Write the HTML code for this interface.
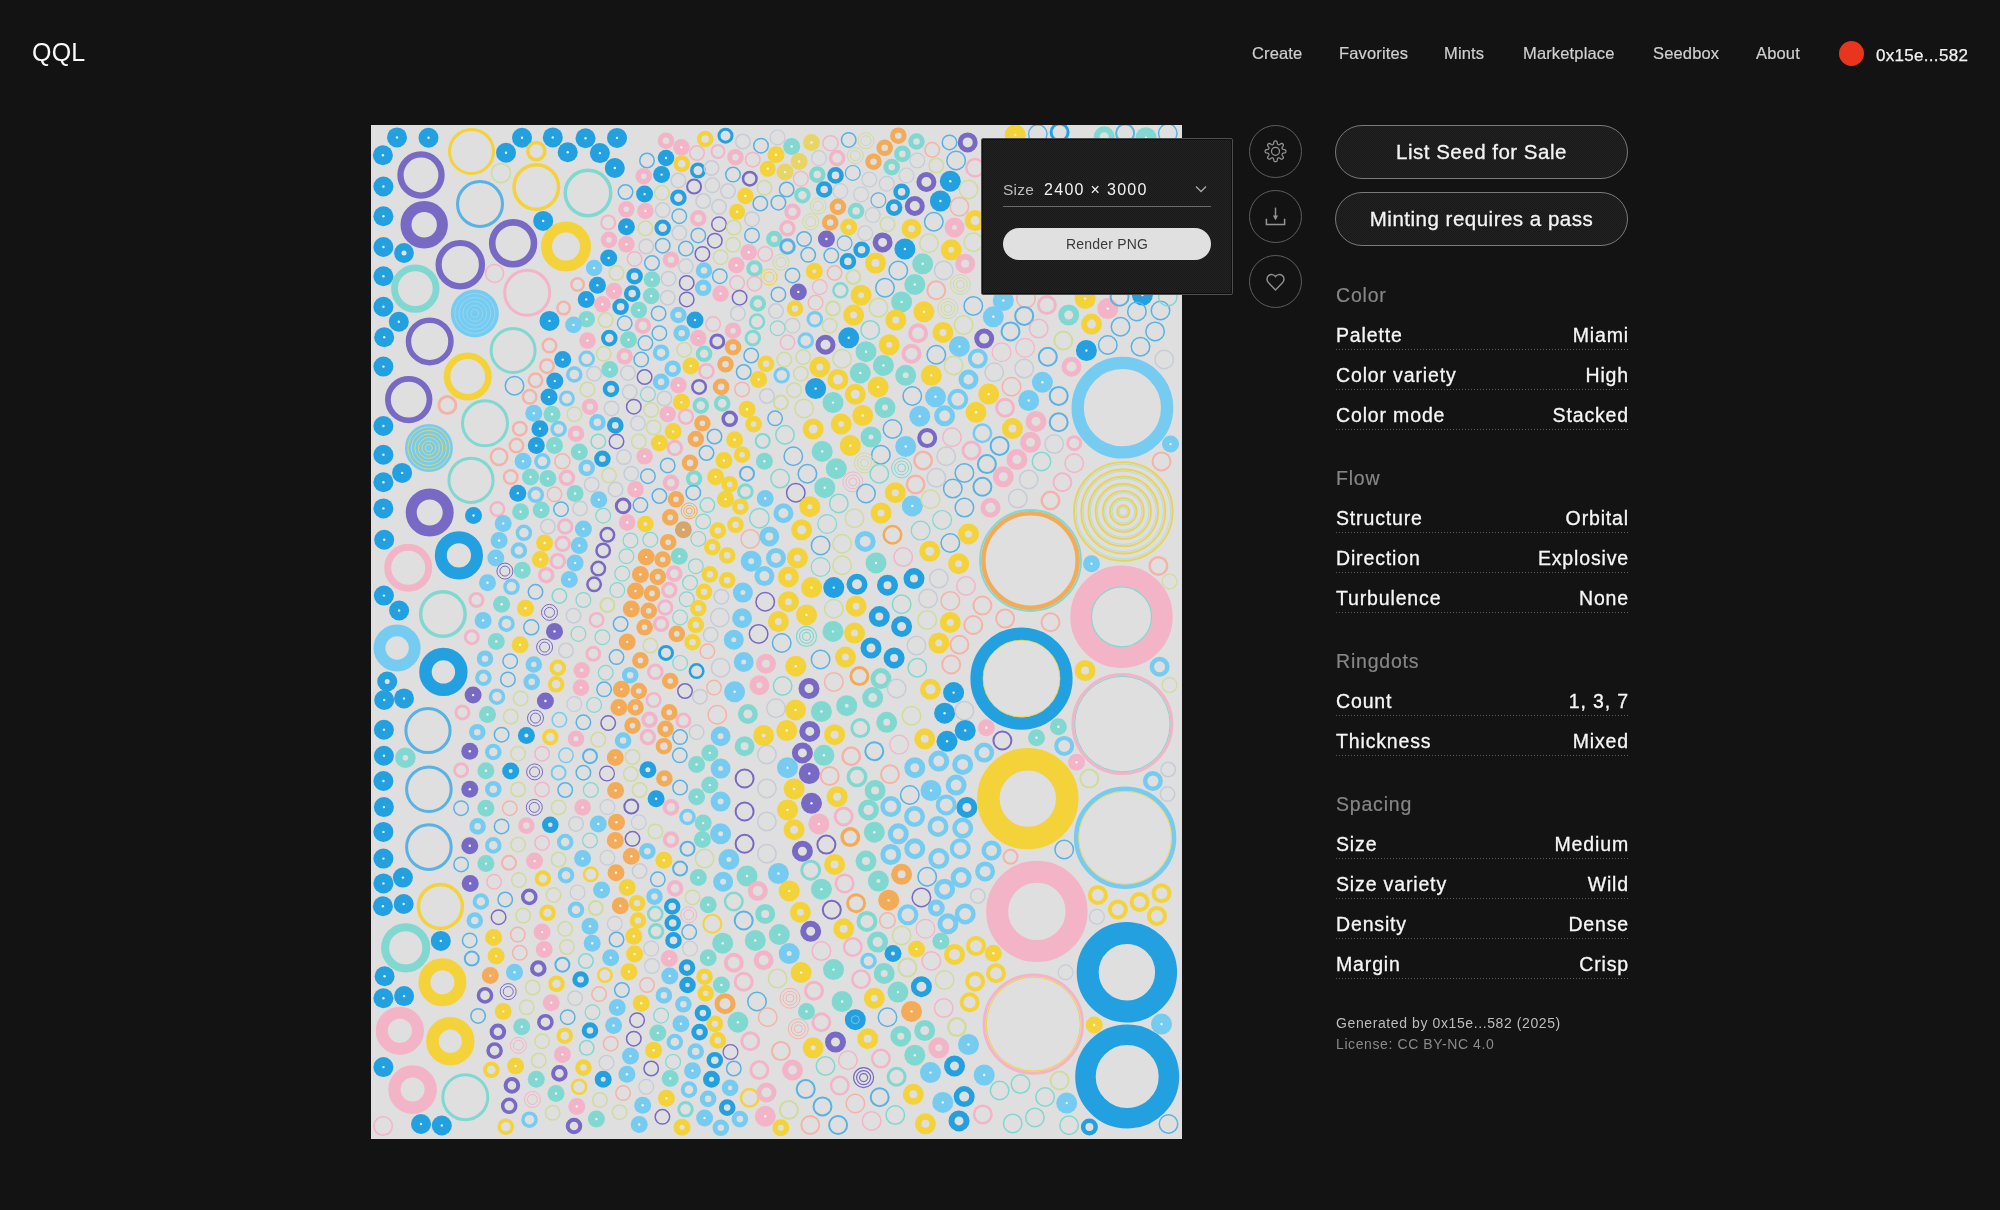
<!DOCTYPE html>
<html><head><meta charset="utf-8"><title>QQL</title>
<style>
html,body{margin:0;padding:0;}
body{width:2000px;height:1210px;background:#131313;position:relative;overflow:hidden;font-family:"Liberation Sans",sans-serif;color:#eee;-webkit-font-smoothing:antialiased;}
.a{will-change:transform;}
.a{position:absolute;white-space:nowrap;}
.logo{left:32px;top:37px;font-size:25px;color:#fafafa;line-height:30px;letter-spacing:0.2px;}
.nav{-webkit-text-stroke:0.2px #cfcfcf;top:43px;font-size:16.5px;color:#cfcfcf;line-height:20px;letter-spacing:0.15px;}
.dot{left:1839px;top:41px;width:25px;height:25px;border-radius:50%;background:#e9351e;}
.wallet{-webkit-text-stroke:0.25px #f2f2f2;left:1876px;top:45.5px;font-size:17px;color:#f2f2f2;line-height:20px;letter-spacing:0.3px;}
.art{left:371px;top:125px;width:811px;height:1014px;background:#dfdfdf;overflow:hidden;}
.pop{left:981px;top:138px;width:250px;height:155px;background:repeating-conic-gradient(#181818 0% 25%,#232323 0% 50%) 0 0/2px 2px;border:1px solid #4e4e4e;border-radius:2px;box-shadow:inset 0 0 0 1px #0f0f0f;}
.ib{left:1249px;width:51px;height:51px;border:1px solid #5e5e5e;border-radius:50%;}
.btn{-webkit-text-stroke:0.3px #f4f4f4;left:1335px;width:291px;height:52px;border:1px solid #7a7a7a;border-radius:27px;background:repeating-conic-gradient(#181818 0% 25%,#222 0% 50%) 0 0/2px 2px;font-size:20.5px;color:#f4f4f4;text-align:center;line-height:52px;letter-spacing:0.5px;}
.sh{-webkit-text-stroke:0.2px #858585;left:1336px;font-size:19.5px;color:#858585;line-height:24px;letter-spacing:0.8px;}
.row{left:1336px;width:292px;font-size:19.5px;color:#f6f6f6;-webkit-text-stroke:0.3px #f6f6f6;line-height:24px;height:24px;letter-spacing:0.85px;}
.row span{position:absolute;right:-1px;top:0;}
.row i{position:absolute;left:0;right:0;top:26px;height:1px;background-image:linear-gradient(to right,#5c5c5c 34%,transparent 34%);background-size:3px 1px;}
.ft{left:1336px;font-size:14px;line-height:17px;letter-spacing:0.6px;}
</style></head><body>
<div class="a logo">QQL</div>
<div class="a nav" style="left:1252px">Create</div>
<div class="a nav" style="left:1339px">Favorites</div>
<div class="a nav" style="left:1444px">Mints</div>
<div class="a nav" style="left:1523px">Marketplace</div>
<div class="a nav" style="left:1653px">Seedbox</div>
<div class="a nav" style="left:1756px">About</div>
<div class="a dot"></div>
<div class="a wallet">0x15e...582</div>
<div class="a art"><svg width="811" height="1014" viewBox="0 0 811 1014" style="position:absolute;left:0;top:0"><circle cx="26.0" cy="12.4" r="10.0" fill="#22a0e0"/><circle cx="26.0" cy="12.4" r="1.2" fill="#f2f2f2"/><circle cx="57.5" cy="12.7" r="10.0" fill="#22a0e0"/><circle cx="57.5" cy="12.7" r="1.2" fill="#f2f2f2"/><circle cx="11.9" cy="30.2" r="10.0" fill="#22a0e0"/><circle cx="11.9" cy="30.2" r="1.2" fill="#f2f2f2"/><circle cx="100.5" cy="26.4" r="22.00" fill="none" stroke="#f4d23a" stroke-width="3.0"/><circle cx="151.0" cy="12.7" r="10.0" fill="#22a0e0"/><circle cx="151.0" cy="12.7" r="1.2" fill="#f2f2f2"/><circle cx="181.8" cy="12.4" r="10.0" fill="#22a0e0"/><circle cx="181.8" cy="12.4" r="1.2" fill="#f2f2f2"/><circle cx="135.0" cy="27.8" r="10.0" fill="#22a0e0"/><circle cx="135.0" cy="27.8" r="1.2" fill="#f2f2f2"/><circle cx="165.3" cy="26.1" r="8.55" fill="none" stroke="#f4d23a" stroke-width="3.5"/><circle cx="196.7" cy="27.3" r="10.0" fill="#22a0e0"/><circle cx="196.7" cy="27.3" r="1.2" fill="#f2f2f2"/><circle cx="50.0" cy="50.0" r="20.55" fill="none" stroke="#7869c4" stroke-width="6.3"/><circle cx="130.0" cy="48.0" r="9.55" fill="none" stroke="#cfdc9c" stroke-width="1.5"/><circle cx="165.3" cy="62.0" r="22.25" fill="none" stroke="#f4d23a" stroke-width="3.5"/><circle cx="12.4" cy="61.5" r="10.0" fill="#22a0e0"/><circle cx="12.4" cy="61.5" r="1.2" fill="#f2f2f2"/><circle cx="109.0" cy="79.0" r="22.50" fill="none" stroke="#58b2e3" stroke-width="3.0"/><circle cx="12.4" cy="91.2" r="10.0" fill="#22a0e0"/><circle cx="12.4" cy="91.2" r="1.2" fill="#f2f2f2"/><circle cx="53.2" cy="99.7" r="18.20" fill="none" stroke="#7869c4" stroke-width="11.0"/><circle cx="172.2" cy="95.9" r="10.0" fill="#22a0e0"/><circle cx="172.2" cy="95.9" r="1.2" fill="#f2f2f2"/><circle cx="142.1" cy="118.3" r="20.90" fill="none" stroke="#7869c4" stroke-width="6.6"/><circle cx="12.4" cy="122.0" r="10.0" fill="#22a0e0"/><circle cx="12.4" cy="122.0" r="1.2" fill="#f2f2f2"/><circle cx="33.0" cy="128.0" r="9.9" fill="#22a0e0"/><circle cx="33.0" cy="128.0" r="2.5" fill="#e2e2e2"/><circle cx="89.3" cy="139.7" r="21.70" fill="none" stroke="#7869c4" stroke-width="6.2"/><circle cx="123.6" cy="148.4" r="9.00" fill="none" stroke="#f4b4c7" stroke-width="1.5"/><circle cx="12.4" cy="151.2" r="10.0" fill="#22a0e0"/><circle cx="12.4" cy="151.2" r="1.2" fill="#f2f2f2"/><circle cx="44.3" cy="163.6" r="20.80" fill="none" stroke="#80d8d1" stroke-width="6.8"/><circle cx="156.2" cy="167.8" r="22.50" fill="none" stroke="#f4b4c7" stroke-width="3.0"/><circle cx="12.4" cy="181.8" r="10.0" fill="#22a0e0"/><circle cx="12.4" cy="181.8" r="1.2" fill="#f2f2f2"/><circle cx="103.8" cy="188.4" r="24.0" fill="#76cbf0"/><circle cx="103.8" cy="188.4" r="4.0" fill="none" stroke="#a8dcf4" stroke-width="0.6"/><circle cx="103.8" cy="188.4" r="8.0" fill="none" stroke="#a8dcf4" stroke-width="0.6"/><circle cx="103.8" cy="188.4" r="12.0" fill="none" stroke="#a8dcf4" stroke-width="0.6"/><circle cx="103.8" cy="188.4" r="16.0" fill="none" stroke="#a8dcf4" stroke-width="0.6"/><circle cx="103.8" cy="188.4" r="20.0" fill="none" stroke="#a8dcf4" stroke-width="0.6"/><circle cx="27.8" cy="196.7" r="10.0" fill="#22a0e0"/><circle cx="27.8" cy="196.7" r="1.2" fill="#f2f2f2"/><circle cx="178.5" cy="195.9" r="10.0" fill="#22a0e0"/><circle cx="178.5" cy="195.9" r="1.2" fill="#f2f2f2"/><circle cx="192.6" cy="183.1" r="6.25" fill="none" stroke="#f5b3a8" stroke-width="2.5"/><circle cx="217.0" cy="68.0" r="22.75" fill="none" stroke="#80d8d1" stroke-width="3.5"/><circle cx="195.0" cy="121.6" r="19.50" fill="none" stroke="#f4d23a" stroke-width="11.0"/><circle cx="214.5" cy="13.2" r="10.0" fill="#22a0e0"/><circle cx="214.5" cy="13.2" r="1.2" fill="#f2f2f2"/><circle cx="246.0" cy="12.9" r="10.0" fill="#22a0e0"/><circle cx="246.0" cy="12.9" r="1.2" fill="#f2f2f2"/><circle cx="228.9" cy="28.1" r="10.0" fill="#22a0e0"/><circle cx="228.9" cy="28.1" r="1.2" fill="#f2f2f2"/><circle cx="243.8" cy="43.0" r="10.0" fill="#22a0e0"/><circle cx="243.8" cy="43.0" r="1.2" fill="#f2f2f2"/><circle cx="203.3" cy="579.1" r="7.40" fill="none" stroke="#c6ccd6" stroke-width="1.2"/><circle cx="223.1" cy="579.9" r="7.40" fill="none" stroke="#80d8d1" stroke-width="1.2"/><circle cx="247.9" cy="582.4" r="8.5" fill="#f3ab58"/><circle cx="247.9" cy="582.4" r="1.2" fill="#f2f2f2"/><circle cx="264.5" cy="582.4" r="5.55" fill="none" stroke="#f3ab58" stroke-width="5.5"/><circle cx="298.3" cy="587.4" r="5.55" fill="none" stroke="#f3ab58" stroke-width="5.5"/><circle cx="312.4" cy="595.6" r="6.50" fill="none" stroke="#f4b4c7" stroke-width="3.0"/><circle cx="346.3" cy="589.8" r="9.25" fill="none" stroke="#f5b3a8" stroke-width="1.5"/><circle cx="376.9" cy="589.0" r="7.25" fill="none" stroke="#80d8d1" stroke-width="5.5"/><circle cx="212.4" cy="597.3" r="7.25" fill="none" stroke="#58b2e3" stroke-width="1.5"/><circle cx="237.2" cy="598.1" r="7.25" fill="none" stroke="#7869c4" stroke-width="1.5"/><circle cx="261.5" cy="600.6" r="5.55" fill="none" stroke="#f3ab58" stroke-width="5.5"/><circle cx="278.5" cy="594.8" r="6.30" fill="none" stroke="#f4b4c7" stroke-width="4.0"/><circle cx="294.5" cy="603.9" r="5.55" fill="none" stroke="#f3ab58" stroke-width="5.5"/><circle cx="325.6" cy="607.2" r="7.25" fill="none" stroke="#c6ccd6" stroke-width="1.5"/><circle cx="349.6" cy="611.3" r="6.50" fill="none" stroke="#76cbf0" stroke-width="7.0"/><circle cx="392.6" cy="610.5" r="10.5" fill="#f4d23a"/><circle cx="392.6" cy="610.5" r="2.0" fill="#e2e2e2"/><circle cx="205.0" cy="613.8" r="8.3" fill="#f4b4c7"/><circle cx="205.0" cy="613.8" r="2.5" fill="#e2e2e2"/><circle cx="227.3" cy="614.6" r="7.25" fill="none" stroke="#cfdc9c" stroke-width="1.5"/><circle cx="252.1" cy="615.5" r="5.80" fill="none" stroke="#76cbf0" stroke-width="5.0"/><circle cx="276.9" cy="612.1" r="6.55" fill="none" stroke="#f4b4c7" stroke-width="3.5"/><circle cx="292.9" cy="621.2" r="6.05" fill="none" stroke="#f3ab58" stroke-width="4.5"/><circle cx="309.1" cy="612.1" r="7.25" fill="none" stroke="#58b2e3" stroke-width="1.5"/><circle cx="373.6" cy="621.2" r="7.00" fill="none" stroke="#80d8d1" stroke-width="6.0"/><circle cx="395.9" cy="629.5" r="9.25" fill="none" stroke="#c6ccd6" stroke-width="1.5"/><circle cx="219.0" cy="631.2" r="7.00" fill="none" stroke="#58b2e3" stroke-width="2.0"/><circle cx="244.3" cy="632.5" r="8.5" fill="#f3ab58"/><circle cx="244.3" cy="632.5" r="1.2" fill="#f2f2f2"/><circle cx="261.5" cy="632.0" r="7.25" fill="none" stroke="#cfdc9c" stroke-width="1.5"/><circle cx="308.8" cy="630.3" r="7.25" fill="none" stroke="#58b2e3" stroke-width="1.5"/><circle cx="338.8" cy="627.9" r="8.5" fill="#80d8d1"/><circle cx="338.8" cy="627.9" r="1.2" fill="#f2f2f2"/><circle cx="325.6" cy="639.4" r="8.5" fill="#80d8d1"/><circle cx="325.6" cy="639.4" r="1.2" fill="#f2f2f2"/><circle cx="349.6" cy="643.6" r="6.25" fill="none" stroke="#76cbf0" stroke-width="7.5"/><circle cx="212.4" cy="647.7" r="7.25" fill="none" stroke="#58b2e3" stroke-width="1.5"/><circle cx="236.0" cy="648.5" r="7.40" fill="none" stroke="#7869c4" stroke-width="1.2"/><circle cx="259.8" cy="649.0" r="7.25" fill="none" stroke="#cfdc9c" stroke-width="1.5"/><circle cx="276.9" cy="644.7" r="8.5" fill="#22a0e0"/><circle cx="276.9" cy="644.7" r="2.5" fill="#e2e2e2"/><circle cx="293.4" cy="653.5" r="5.55" fill="none" stroke="#f3ab58" stroke-width="5.5"/><circle cx="309.1" cy="662.6" r="7.25" fill="none" stroke="#58b2e3" stroke-width="1.5"/><circle cx="338.8" cy="660.1" r="8.5" fill="#80d8d1"/><circle cx="338.8" cy="660.1" r="1.2" fill="#f2f2f2"/><circle cx="325.6" cy="671.7" r="8.5" fill="#80d8d1"/><circle cx="325.6" cy="671.7" r="1.2" fill="#f2f2f2"/><circle cx="373.6" cy="653.5" r="9.00" fill="none" stroke="#7869c4" stroke-width="2.0"/><circle cx="395.9" cy="663.4" r="9.25" fill="none" stroke="#c6ccd6" stroke-width="1.5"/><circle cx="219.8" cy="665.0" r="7.40" fill="none" stroke="#80d8d1" stroke-width="1.2"/><circle cx="244.6" cy="665.5" r="8.5" fill="#f3ab58"/><circle cx="244.6" cy="665.5" r="1.2" fill="#f2f2f2"/><circle cx="268.6" cy="665.0" r="7.25" fill="none" stroke="#cfdc9c" stroke-width="1.5"/><circle cx="285.1" cy="673.8" r="8.5" fill="#22a0e0"/><circle cx="285.1" cy="673.8" r="1.2" fill="#f2f2f2"/><circle cx="300.0" cy="682.4" r="6.30" fill="none" stroke="#f4b4c7" stroke-width="4.0"/><circle cx="349.6" cy="676.6" r="6.50" fill="none" stroke="#76cbf0" stroke-width="7.0"/><circle cx="211.6" cy="682.4" r="8.3" fill="#f4b4c7"/><circle cx="211.6" cy="682.4" r="1.2" fill="#f2f2f2"/><circle cx="236.4" cy="682.1" r="7.40" fill="none" stroke="#c6ccd6" stroke-width="1.2"/><circle cx="260.3" cy="681.6" r="7.00" fill="none" stroke="#7869c4" stroke-width="2.0"/><circle cx="316.5" cy="692.0" r="6.55" fill="none" stroke="#76cbf0" stroke-width="3.5"/><circle cx="332.2" cy="698.1" r="8.5" fill="#80d8d1"/><circle cx="332.2" cy="698.1" r="1.2" fill="#f2f2f2"/><circle cx="373.6" cy="686.5" r="9.00" fill="none" stroke="#7869c4" stroke-width="2.0"/><circle cx="395.9" cy="696.4" r="9.25" fill="none" stroke="#c6ccd6" stroke-width="1.5"/><circle cx="205.0" cy="698.9" r="7.25" fill="none" stroke="#c6ccd6" stroke-width="1.5"/><circle cx="227.3" cy="698.9" r="8.5" fill="#76cbf0"/><circle cx="227.3" cy="698.9" r="1.2" fill="#f2f2f2"/><circle cx="245.5" cy="697.3" r="8.5" fill="#f3ab58"/><circle cx="245.5" cy="697.3" r="1.2" fill="#f2f2f2"/><circle cx="267.8" cy="697.3" r="7.40" fill="none" stroke="#c6ccd6" stroke-width="1.2"/><circle cx="284.3" cy="706.4" r="7.25" fill="none" stroke="#cfdc9c" stroke-width="1.5"/><circle cx="349.6" cy="708.8" r="10.5" fill="#76cbf0"/><circle cx="349.6" cy="708.8" r="2.5" fill="#e2e2e2"/><circle cx="219.0" cy="715.5" r="7.40" fill="none" stroke="#80d8d1" stroke-width="1.2"/><circle cx="244.3" cy="715.5" r="8.5" fill="#f3ab58"/><circle cx="244.3" cy="715.5" r="1.2" fill="#f2f2f2"/><circle cx="261.5" cy="713.8" r="7.25" fill="none" stroke="#7869c4" stroke-width="1.5"/><circle cx="300.0" cy="714.6" r="6.30" fill="none" stroke="#f4b4c7" stroke-width="4.0"/><circle cx="316.5" cy="723.7" r="7.00" fill="none" stroke="#58b2e3" stroke-width="2.0"/><circle cx="331.4" cy="714.6" r="8.5" fill="#80d8d1"/><circle cx="331.4" cy="714.6" r="1.2" fill="#f2f2f2"/><circle cx="373.6" cy="718.8" r="9.00" fill="none" stroke="#7869c4" stroke-width="2.0"/><circle cx="395.9" cy="728.7" r="9.25" fill="none" stroke="#c6ccd6" stroke-width="1.5"/><circle cx="211.6" cy="733.6" r="8.5" fill="#76cbf0"/><circle cx="211.6" cy="733.6" r="1.2" fill="#f2f2f2"/><circle cx="236.4" cy="732.8" r="7.40" fill="none" stroke="#c6ccd6" stroke-width="1.2"/><circle cx="260.3" cy="731.2" r="8.5" fill="#f3ab58"/><circle cx="260.3" cy="731.2" r="1.2" fill="#f2f2f2"/><circle cx="276.4" cy="726.2" r="5.80" fill="none" stroke="#76cbf0" stroke-width="5.0"/><circle cx="292.9" cy="735.3" r="8.5" fill="#f4d23a"/><circle cx="292.9" cy="735.3" r="1.2" fill="#f2f2f2"/><circle cx="333.6" cy="733.6" r="9.25" fill="none" stroke="#cfdc9c" stroke-width="1.5"/><circle cx="357.9" cy="734.5" r="10.5" fill="#76cbf0"/><circle cx="357.9" cy="734.5" r="2.5" fill="#e2e2e2"/><circle cx="219.8" cy="749.3" r="6.75" fill="none" stroke="#f4d23a" stroke-width="2.5"/><circle cx="245.0" cy="747.7" r="8.5" fill="#f3ab58"/><circle cx="245.0" cy="747.7" r="1.2" fill="#f2f2f2"/><circle cx="268.6" cy="746.0" r="7.25" fill="none" stroke="#c6ccd6" stroke-width="1.5"/><circle cx="286.8" cy="754.3" r="7.25" fill="none" stroke="#58b2e3" stroke-width="1.5"/><circle cx="309.1" cy="743.6" r="7.00" fill="none" stroke="#58b2e3" stroke-width="2.0"/><circle cx="327.3" cy="752.6" r="8.5" fill="#80d8d1"/><circle cx="327.3" cy="752.6" r="1.2" fill="#f2f2f2"/><circle cx="352.1" cy="756.8" r="6.50" fill="none" stroke="#76cbf0" stroke-width="7.0"/><circle cx="376.0" cy="751.0" r="10.5" fill="#80d8d1"/><circle cx="376.0" cy="751.0" r="1.2" fill="#f2f2f2"/><circle cx="230.6" cy="765.0" r="8.5" fill="#76cbf0"/><circle cx="230.6" cy="765.0" r="1.2" fill="#f2f2f2"/><circle cx="256.2" cy="762.6" r="8.5" fill="#f4d23a"/><circle cx="256.2" cy="762.6" r="1.2" fill="#f2f2f2"/><circle cx="304.1" cy="763.4" r="6.30" fill="none" stroke="#f4b4c7" stroke-width="4.0"/><circle cx="386.8" cy="765.9" r="7.50" fill="none" stroke="#f4b4c7" stroke-width="5.0"/><circle cx="206.6" cy="767.4" r="7.40" fill="none" stroke="#c6ccd6" stroke-width="1.2"/><circle cx="283.5" cy="771.6" r="5.80" fill="none" stroke="#76cbf0" stroke-width="5.0"/><circle cx="321.5" cy="772.4" r="7.25" fill="none" stroke="#cfdc9c" stroke-width="1.5"/><circle cx="337.2" cy="779.8" r="8.5" fill="#80d8d1"/><circle cx="337.2" cy="779.8" r="1.2" fill="#f2f2f2"/><circle cx="362.8" cy="776.5" r="8.75" fill="none" stroke="#80d8d1" stroke-width="2.5"/><circle cx="205.0" cy="784.8" r="6.30" fill="none" stroke="#76cbf0" stroke-width="4.0"/><circle cx="224.8" cy="783.1" r="7.00" fill="none" stroke="#cfdc9c" stroke-width="2.0"/><circle cx="249.3" cy="780.7" r="8.5" fill="#f3ab58"/><circle cx="249.3" cy="780.7" r="1.2" fill="#f2f2f2"/><circle cx="266.1" cy="778.2" r="5.80" fill="none" stroke="#f4d23a" stroke-width="5.0"/><circle cx="284.3" cy="788.9" r="7.05" fill="none" stroke="#80d8d1" stroke-width="2.5"/><circle cx="301.2" cy="781.5" r="6.05" fill="none" stroke="#22a0e0" stroke-width="4.5"/><circle cx="317.7" cy="789.8" r="8.0" fill="none" stroke="#f4b4c7" stroke-width="1.0"/><circle cx="317.7" cy="789.8" r="5.0" fill="none" stroke="#f4b4c7" stroke-width="1.0"/><circle cx="341.3" cy="798.8" r="9.00" fill="none" stroke="#f4d23a" stroke-width="2.0"/><circle cx="372.7" cy="795.5" r="9.00" fill="none" stroke="#58b2e3" stroke-width="2.0"/><circle cx="394.2" cy="788.9" r="7.00" fill="none" stroke="#80d8d1" stroke-width="6.0"/><circle cx="219.0" cy="801.3" r="8.5" fill="#76cbf0"/><circle cx="219.0" cy="801.3" r="1.2" fill="#f2f2f2"/><circle cx="243.8" cy="798.8" r="7.40" fill="none" stroke="#c6ccd6" stroke-width="1.2"/><circle cx="266.9" cy="795.5" r="5.80" fill="none" stroke="#f4d23a" stroke-width="5.0"/><circle cx="285.1" cy="806.3" r="6.80" fill="none" stroke="#80d8d1" stroke-width="3.0"/><circle cx="301.7" cy="798.0" r="6.05" fill="none" stroke="#22a0e0" stroke-width="4.5"/><circle cx="318.2" cy="807.1" r="7.25" fill="none" stroke="#58b2e3" stroke-width="1.5"/><circle cx="221.2" cy="818.2" r="8.5" fill="#76cbf0"/><circle cx="221.2" cy="818.2" r="1.2" fill="#f2f2f2"/><circle cx="245.5" cy="814.5" r="7.25" fill="none" stroke="#58b2e3" stroke-width="1.5"/><circle cx="262.8" cy="811.2" r="8.5" fill="#f4d23a"/><circle cx="262.8" cy="811.2" r="1.2" fill="#f2f2f2"/><circle cx="302.5" cy="815.4" r="6.05" fill="none" stroke="#22a0e0" stroke-width="4.5"/><circle cx="319.0" cy="823.6" r="7.40" fill="none" stroke="#c6ccd6" stroke-width="1.2"/><circle cx="351.7" cy="818.2" r="10.5" fill="#80d8d1"/><circle cx="351.7" cy="818.2" r="1.2" fill="#f2f2f2"/><circle cx="384.3" cy="815.4" r="10.5" fill="#80d8d1"/><circle cx="384.3" cy="815.4" r="1.2" fill="#f2f2f2"/><circle cx="280.2" cy="823.6" r="7.40" fill="none" stroke="#c6ccd6" stroke-width="1.2"/><circle cx="214.9" cy="836.0" r="7.25" fill="none" stroke="#80d8d1" stroke-width="1.5"/><circle cx="239.7" cy="832.7" r="8.5" fill="#76cbf0"/><circle cx="239.7" cy="832.7" r="1.2" fill="#f2f2f2"/><circle cx="263.6" cy="829.1" r="8.5" fill="#f4d23a"/><circle cx="263.6" cy="829.1" r="1.2" fill="#f2f2f2"/><circle cx="281.0" cy="841.0" r="7.40" fill="none" stroke="#c6ccd6" stroke-width="1.2"/><circle cx="298.3" cy="833.6" r="8.5" fill="#f4b4c7"/><circle cx="298.3" cy="833.6" r="1.2" fill="#f2f2f2"/><circle cx="337.2" cy="832.7" r="8.5" fill="#80d8d1"/><circle cx="337.2" cy="832.7" r="1.2" fill="#f2f2f2"/><circle cx="362.8" cy="837.7" r="8.00" fill="none" stroke="#f4b4c7" stroke-width="4.0"/><circle cx="392.6" cy="835.2" r="7.50" fill="none" stroke="#f4b4c7" stroke-width="5.0"/><circle cx="209.6" cy="854.5" r="5.80" fill="none" stroke="#22a0e0" stroke-width="5.0"/><circle cx="233.9" cy="850.1" r="6.75" fill="none" stroke="#f4d23a" stroke-width="2.5"/><circle cx="257.9" cy="846.8" r="8.5" fill="#f4d23a"/><circle cx="257.9" cy="846.8" r="1.2" fill="#f2f2f2"/><circle cx="298.8" cy="850.9" r="8.5" fill="#76cbf0"/><circle cx="298.8" cy="850.9" r="1.2" fill="#f2f2f2"/><circle cx="316.0" cy="842.6" r="5.80" fill="none" stroke="#22a0e0" stroke-width="5.0"/><circle cx="316.5" cy="860.0" r="5.30" fill="none" stroke="#22a0e0" stroke-width="6.0"/><circle cx="333.6" cy="851.7" r="5.80" fill="none" stroke="#f4d23a" stroke-width="5.0"/><circle cx="350.4" cy="860.0" r="8.5" fill="#80d8d1"/><circle cx="350.4" cy="860.0" r="1.2" fill="#f2f2f2"/><circle cx="372.7" cy="856.7" r="8.50" fill="none" stroke="#f4b4c7" stroke-width="3.0"/><circle cx="204.1" cy="873.2" r="7.25" fill="none" stroke="#c6ccd6" stroke-width="1.5"/><circle cx="228.1" cy="869.1" r="7.25" fill="none" stroke="#f5b3a8" stroke-width="1.5"/><circle cx="250.9" cy="865.0" r="7.25" fill="none" stroke="#58b2e3" stroke-width="1.5"/><circle cx="276.0" cy="860.0" r="7.25" fill="none" stroke="#f5b3a8" stroke-width="1.5"/><circle cx="292.9" cy="870.4" r="5.80" fill="none" stroke="#76cbf0" stroke-width="5.0"/><circle cx="334.7" cy="868.3" r="5.55" fill="none" stroke="#f4d23a" stroke-width="5.5"/><circle cx="354.0" cy="878.7" r="8.00" fill="none" stroke="#f3ab58" stroke-width="5.0"/><circle cx="386.0" cy="876.5" r="9.25" fill="none" stroke="#58b2e3" stroke-width="1.5"/><circle cx="221.5" cy="887.3" r="7.40" fill="none" stroke="#80d8d1" stroke-width="1.2"/><circle cx="246.3" cy="882.6" r="8.5" fill="#76cbf0"/><circle cx="246.3" cy="882.6" r="1.2" fill="#f2f2f2"/><circle cx="270.2" cy="878.2" r="8.5" fill="#f4d23a"/><circle cx="270.2" cy="878.2" r="1.2" fill="#f2f2f2"/><circle cx="312.4" cy="879.3" r="5.80" fill="none" stroke="#76cbf0" stroke-width="5.0"/><circle cx="331.9" cy="888.1" r="5.80" fill="none" stroke="#22a0e0" stroke-width="5.0"/><circle cx="290.1" cy="890.6" r="7.40" fill="none" stroke="#80d8d1" stroke-width="1.2"/><circle cx="366.9" cy="897.2" r="10.5" fill="#80d8d1"/><circle cx="366.9" cy="897.2" r="1.2" fill="#f2f2f2"/><circle cx="396.7" cy="892.2" r="9.25" fill="none" stroke="#f5b3a8" stroke-width="1.5"/><circle cx="219.0" cy="905.5" r="5.80" fill="none" stroke="#22a0e0" stroke-width="5.0"/><circle cx="242.6" cy="900.5" r="8.5" fill="#76cbf0"/><circle cx="242.6" cy="900.5" r="1.2" fill="#f2f2f2"/><circle cx="266.1" cy="895.2" r="7.25" fill="none" stroke="#7869c4" stroke-width="1.5"/><circle cx="286.8" cy="907.9" r="8.5" fill="#80d8d1"/><circle cx="286.8" cy="907.9" r="1.2" fill="#f2f2f2"/><circle cx="309.9" cy="898.8" r="8.5" fill="#76cbf0"/><circle cx="309.9" cy="898.8" r="1.2" fill="#f2f2f2"/><circle cx="328.6" cy="907.1" r="5.80" fill="none" stroke="#22a0e0" stroke-width="5.0"/><circle cx="343.8" cy="898.8" r="5.80" fill="none" stroke="#f4d23a" stroke-width="5.0"/><circle cx="379.3" cy="916.2" r="8.50" fill="none" stroke="#f4b4c7" stroke-width="3.0"/><circle cx="215.7" cy="922.8" r="7.25" fill="none" stroke="#80d8d1" stroke-width="1.5"/><circle cx="239.7" cy="918.7" r="7.25" fill="none" stroke="#f5b3a8" stroke-width="1.5"/><circle cx="262.8" cy="913.7" r="7.25" fill="none" stroke="#7869c4" stroke-width="1.5"/><circle cx="303.8" cy="917.0" r="6.30" fill="none" stroke="#76cbf0" stroke-width="4.0"/><circle cx="346.8" cy="915.4" r="5.80" fill="none" stroke="#f4d23a" stroke-width="5.0"/><circle cx="359.5" cy="927.0" r="7.40" fill="none" stroke="#7869c4" stroke-width="1.2"/><circle cx="212.4" cy="942.6" r="5.80" fill="none" stroke="#f4d23a" stroke-width="5.0"/><circle cx="235.5" cy="937.7" r="7.40" fill="none" stroke="#c6ccd6" stroke-width="1.2"/><circle cx="259.5" cy="931.1" r="8.5" fill="#76cbf0"/><circle cx="259.5" cy="931.1" r="1.2" fill="#f2f2f2"/><circle cx="282.6" cy="925.3" r="8.5" fill="#f4d23a"/><circle cx="282.6" cy="925.3" r="1.2" fill="#f2f2f2"/><circle cx="302.1" cy="936.9" r="7.40" fill="none" stroke="#80d8d1" stroke-width="1.2"/><circle cx="324.7" cy="926.5" r="6.05" fill="none" stroke="#76cbf0" stroke-width="4.5"/><circle cx="343.8" cy="935.2" r="6.05" fill="none" stroke="#22a0e0" stroke-width="4.5"/><circle cx="362.8" cy="943.5" r="7.25" fill="none" stroke="#58b2e3" stroke-width="1.5"/><circle cx="388.4" cy="945.1" r="8.50" fill="none" stroke="#f4b4c7" stroke-width="3.0"/><circle cx="232.2" cy="954.2" r="5.50" fill="none" stroke="#22a0e0" stroke-width="6.0"/><circle cx="255.9" cy="949.3" r="8.5" fill="#76cbf0"/><circle cx="255.9" cy="949.3" r="1.2" fill="#f2f2f2"/><circle cx="280.2" cy="943.5" r="7.25" fill="none" stroke="#7869c4" stroke-width="1.5"/><circle cx="299.2" cy="953.4" r="8.5" fill="#80d8d1"/><circle cx="299.2" cy="953.4" r="1.2" fill="#f2f2f2"/><circle cx="321.5" cy="945.8" r="8.5" fill="#76cbf0"/><circle cx="321.5" cy="945.8" r="1.2" fill="#f2f2f2"/><circle cx="340.5" cy="954.2" r="5.50" fill="none" stroke="#22a0e0" stroke-width="6.0"/><circle cx="208.1" cy="961.8" r="7.05" fill="none" stroke="#f4d23a" stroke-width="2.5"/><circle cx="252.1" cy="968.1" r="7.25" fill="none" stroke="#f5b3a8" stroke-width="1.5"/><circle cx="275.2" cy="961.8" r="7.40" fill="none" stroke="#c6ccd6" stroke-width="1.2"/><circle cx="318.0" cy="964.6" r="6.30" fill="none" stroke="#76cbf0" stroke-width="4.0"/><circle cx="359.1" cy="962.9" r="5.30" fill="none" stroke="#76cbf0" stroke-width="6.0"/><circle cx="378.7" cy="972.7" r="8.75" fill="none" stroke="#f4d23a" stroke-width="2.5"/><circle cx="395.5" cy="967.5" r="7.50" fill="none" stroke="#f4b4c7" stroke-width="5.0"/><circle cx="205.8" cy="981.4" r="8.5" fill="#f4b4c7"/><circle cx="205.8" cy="981.4" r="1.2" fill="#f2f2f2"/><circle cx="228.9" cy="975.1" r="7.25" fill="none" stroke="#cfdc9c" stroke-width="1.5"/><circle cx="271.7" cy="980.3" r="8.5" fill="#76cbf0"/><circle cx="271.7" cy="980.3" r="1.2" fill="#f2f2f2"/><circle cx="295.4" cy="973.3" r="8.5" fill="#f4d23a"/><circle cx="295.4" cy="973.3" r="1.2" fill="#f2f2f2"/><circle cx="337.1" cy="973.9" r="5.80" fill="none" stroke="#76cbf0" stroke-width="5.0"/><circle cx="314.5" cy="984.3" r="6.80" fill="none" stroke="#80d8d1" stroke-width="3.0"/><circle cx="356.2" cy="982.6" r="5.80" fill="none" stroke="#22a0e0" stroke-width="5.0"/><circle cx="225.4" cy="994.1" r="8.5" fill="#80d8d1"/><circle cx="225.4" cy="994.1" r="1.2" fill="#f2f2f2"/><circle cx="248.6" cy="987.2" r="7.25" fill="none" stroke="#cfdc9c" stroke-width="1.5"/><circle cx="291.4" cy="991.8" r="7.25" fill="none" stroke="#7869c4" stroke-width="1.5"/><circle cx="268.2" cy="999.4" r="8.5" fill="#76cbf0"/><circle cx="268.2" cy="999.4" r="1.2" fill="#f2f2f2"/><circle cx="333.6" cy="993.0" r="8.5" fill="#76cbf0"/><circle cx="333.6" cy="993.0" r="1.2" fill="#f2f2f2"/><circle cx="368.9" cy="994.1" r="5.80" fill="none" stroke="#76cbf0" stroke-width="5.0"/><circle cx="394.3" cy="991.3" r="10.5" fill="#f4b4c7"/><circle cx="394.3" cy="991.3" r="1.2" fill="#f2f2f2"/><circle cx="203.0" cy="1001.0" r="6.30" fill="none" stroke="#7869c4" stroke-width="4.0"/><circle cx="311.0" cy="1002.2" r="8.5" fill="#f4d23a"/><circle cx="311.0" cy="1002.2" r="2.5" fill="#e2e2e2"/><circle cx="349.8" cy="1002.8" r="5.80" fill="none" stroke="#76cbf0" stroke-width="5.0"/><circle cx="406.6" cy="12.4" r="7.40" fill="none" stroke="#c6ccd6" stroke-width="1.2"/><circle cx="420.7" cy="21.5" r="8.5" fill="#80d8d1"/><circle cx="420.7" cy="21.5" r="1.2" fill="#f2f2f2"/><circle cx="440.5" cy="17.4" r="8.5" fill="#e7d566"/><circle cx="440.5" cy="17.4" r="1.2" fill="#f2f2f2"/><circle cx="459.5" cy="18.2" r="7.55" fill="none" stroke="#f4b4c7" stroke-width="1.5"/><circle cx="477.7" cy="14.9" r="7.25" fill="none" stroke="#58b2e3" stroke-width="1.5"/><circle cx="495.0" cy="15.7" r="8.0" fill="none" stroke="#cfdc9c" stroke-width="1.0"/><circle cx="495.0" cy="15.7" r="5.0" fill="none" stroke="#cfdc9c" stroke-width="1.0"/><circle cx="527.3" cy="10.7" r="5.80" fill="none" stroke="#f3ab58" stroke-width="5.0"/><circle cx="513.7" cy="22.8" r="5.80" fill="none" stroke="#f3ab58" stroke-width="5.0"/><circle cx="545.5" cy="16.5" r="5.80" fill="none" stroke="#80d8d1" stroke-width="5.0"/><circle cx="561.2" cy="24.8" r="7.25" fill="none" stroke="#f5b3a8" stroke-width="1.5"/><circle cx="578.5" cy="17.4" r="7.25" fill="none" stroke="#58b2e3" stroke-width="1.5"/><circle cx="596.7" cy="17.4" r="7.50" fill="none" stroke="#7869c4" stroke-width="5.0"/><circle cx="405.0" cy="29.8" r="8.5" fill="#f4d23a"/><circle cx="405.0" cy="29.8" r="1.2" fill="#f2f2f2"/><circle cx="447.9" cy="33.1" r="7.40" fill="none" stroke="#c6ccd6" stroke-width="1.2"/><circle cx="466.1" cy="33.1" r="6.55" fill="none" stroke="#f4b4c7" stroke-width="3.5"/><circle cx="484.3" cy="30.6" r="8.0" fill="none" stroke="#cfdc9c" stroke-width="1.0"/><circle cx="484.3" cy="30.6" r="5.0" fill="none" stroke="#cfdc9c" stroke-width="1.0"/><circle cx="502.5" cy="36.7" r="5.80" fill="none" stroke="#f3ab58" stroke-width="5.0"/><circle cx="531.4" cy="28.9" r="5.80" fill="none" stroke="#80d8d1" stroke-width="5.0"/><circle cx="546.3" cy="35.5" r="7.40" fill="none" stroke="#c6ccd6" stroke-width="1.2"/><circle cx="565.3" cy="40.5" r="7.25" fill="none" stroke="#cfdc9c" stroke-width="1.5"/><circle cx="585.1" cy="35.5" r="9.25" fill="none" stroke="#58b2e3" stroke-width="1.5"/><circle cx="428.1" cy="36.4" r="8.5" fill="#e7d566"/><circle cx="428.1" cy="36.4" r="1.2" fill="#f2f2f2"/><circle cx="414.0" cy="47.1" r="8.5" fill="#e7d566"/><circle cx="414.0" cy="47.1" r="1.2" fill="#f2f2f2"/><circle cx="429.8" cy="53.7" r="7.40" fill="none" stroke="#f4b4c7" stroke-width="1.2"/><circle cx="446.3" cy="49.6" r="6.05" fill="none" stroke="#80d8d1" stroke-width="4.5"/><circle cx="464.5" cy="50.4" r="6.05" fill="none" stroke="#22a0e0" stroke-width="4.5"/><circle cx="481.8" cy="47.9" r="7.40" fill="none" stroke="#58b2e3" stroke-width="1.2"/><circle cx="498.3" cy="54.5" r="7.40" fill="none" stroke="#c6ccd6" stroke-width="1.2"/><circle cx="520.7" cy="42.1" r="5.80" fill="none" stroke="#80d8d1" stroke-width="5.0"/><circle cx="535.5" cy="50.4" r="7.40" fill="none" stroke="#c6ccd6" stroke-width="1.2"/><circle cx="555.4" cy="57.0" r="7.50" fill="none" stroke="#7869c4" stroke-width="5.0"/><circle cx="579.3" cy="56.2" r="10.5" fill="#22a0e0"/><circle cx="579.3" cy="56.2" r="1.2" fill="#f2f2f2"/><circle cx="597.5" cy="64.5" r="9.25" fill="none" stroke="#cfdc9c" stroke-width="1.5"/><circle cx="415.7" cy="64.5" r="7.25" fill="none" stroke="#58b2e3" stroke-width="1.5"/><circle cx="453.2" cy="64.5" r="6.05" fill="none" stroke="#22a0e0" stroke-width="4.5"/><circle cx="469.4" cy="66.1" r="7.40" fill="none" stroke="#c6ccd6" stroke-width="1.2"/><circle cx="490.1" cy="69.4" r="7.40" fill="none" stroke="#c6ccd6" stroke-width="1.2"/><circle cx="515.7" cy="58.7" r="7.40" fill="none" stroke="#c6ccd6" stroke-width="1.2"/><circle cx="530.6" cy="66.9" r="6.05" fill="none" stroke="#22a0e0" stroke-width="4.5"/><circle cx="407.4" cy="77.7" r="7.25" fill="none" stroke="#58b2e3" stroke-width="1.5"/><circle cx="431.4" cy="70.2" r="6.30" fill="none" stroke="#80d8d1" stroke-width="4.0"/><circle cx="447.1" cy="81.0" r="8.0" fill="none" stroke="#cfdc9c" stroke-width="1.0"/><circle cx="447.1" cy="81.0" r="5.0" fill="none" stroke="#cfdc9c" stroke-width="1.0"/><circle cx="466.9" cy="81.8" r="5.80" fill="none" stroke="#f3ab58" stroke-width="5.0"/><circle cx="485.1" cy="86.0" r="6.05" fill="none" stroke="#80d8d1" stroke-width="4.5"/><circle cx="507.4" cy="75.2" r="7.40" fill="none" stroke="#58b2e3" stroke-width="1.2"/><circle cx="523.1" cy="82.6" r="6.05" fill="none" stroke="#22a0e0" stroke-width="4.5"/><circle cx="543.8" cy="81.0" r="7.50" fill="none" stroke="#7869c4" stroke-width="5.0"/><circle cx="569.4" cy="76.0" r="10.5" fill="#22a0e0"/><circle cx="569.4" cy="76.0" r="1.2" fill="#f2f2f2"/><circle cx="588.4" cy="81.8" r="9.25" fill="none" stroke="#f5b3a8" stroke-width="1.5"/><circle cx="421.5" cy="86.8" r="6.30" fill="none" stroke="#f4b4c7" stroke-width="4.0"/><circle cx="439.7" cy="96.7" r="8.0" fill="none" stroke="#cfdc9c" stroke-width="1.0"/><circle cx="439.7" cy="96.7" r="5.0" fill="none" stroke="#cfdc9c" stroke-width="1.0"/><circle cx="459.2" cy="97.5" r="5.80" fill="none" stroke="#f3ab58" stroke-width="5.0"/><circle cx="477.7" cy="102.1" r="8.5" fill="#f4d23a"/><circle cx="477.7" cy="102.1" r="2.5" fill="#e2e2e2"/><circle cx="501.7" cy="90.1" r="7.40" fill="none" stroke="#c6ccd6" stroke-width="1.2"/><circle cx="516.5" cy="99.2" r="7.25" fill="none" stroke="#cfdc9c" stroke-width="1.5"/><circle cx="540.5" cy="103.8" r="6.75" fill="none" stroke="#f4d23a" stroke-width="6.5"/><circle cx="562.8" cy="96.7" r="9.25" fill="none" stroke="#58b2e3" stroke-width="1.5"/><circle cx="583.5" cy="102.5" r="6.25" fill="none" stroke="#f4b4c7" stroke-width="7.5"/><circle cx="416.5" cy="103.3" r="6.55" fill="none" stroke="#f4b4c7" stroke-width="3.5"/><circle cx="403.3" cy="114.0" r="5.80" fill="none" stroke="#80d8d1" stroke-width="5.0"/><circle cx="433.1" cy="114.0" r="7.25" fill="none" stroke="#58b2e3" stroke-width="1.5"/><circle cx="455.4" cy="114.0" r="8.5" fill="#7869c4"/><circle cx="455.4" cy="114.0" r="1.2" fill="#f2f2f2"/><circle cx="473.6" cy="118.2" r="7.40" fill="none" stroke="#58b2e3" stroke-width="1.2"/><circle cx="494.2" cy="108.3" r="7.40" fill="none" stroke="#c6ccd6" stroke-width="1.2"/><circle cx="490.6" cy="124.8" r="6.05" fill="none" stroke="#22a0e0" stroke-width="4.5"/><circle cx="511.6" cy="117.4" r="7.25" fill="none" stroke="#7869c4" stroke-width="5.5"/><circle cx="533.9" cy="124.0" r="10.5" fill="#22a0e0"/><circle cx="533.9" cy="124.0" r="1.2" fill="#f2f2f2"/><circle cx="557.9" cy="118.2" r="9.25" fill="none" stroke="#cfdc9c" stroke-width="1.5"/><circle cx="580.2" cy="124.8" r="6.75" fill="none" stroke="#f4d23a" stroke-width="7.5"/><circle cx="416.5" cy="121.5" r="6.80" fill="none" stroke="#58b2e3" stroke-width="3.0"/><circle cx="437.2" cy="129.8" r="7.25" fill="none" stroke="#58b2e3" stroke-width="1.5"/><circle cx="460.3" cy="130.6" r="7.25" fill="none" stroke="#58b2e3" stroke-width="1.5"/><circle cx="476.9" cy="136.4" r="6.05" fill="none" stroke="#22a0e0" stroke-width="4.5"/><circle cx="504.5" cy="138.0" r="7.25" fill="none" stroke="#f4d23a" stroke-width="6.5"/><circle cx="551.7" cy="138.8" r="10.5" fill="#80d8d1"/><circle cx="551.7" cy="138.8" r="1.2" fill="#f2f2f2"/><circle cx="594.2" cy="138.8" r="7.00" fill="none" stroke="#f4b4c7" stroke-width="6.0"/><circle cx="409.9" cy="137.2" r="8.0" fill="none" stroke="#cfdc9c" stroke-width="1.0"/><circle cx="409.9" cy="137.2" r="5.0" fill="none" stroke="#cfdc9c" stroke-width="1.0"/><circle cx="443.3" cy="146.3" r="8.5" fill="#f4d23a"/><circle cx="443.3" cy="146.3" r="2.0" fill="#e2e2e2"/><circle cx="463.6" cy="147.9" r="7.25" fill="none" stroke="#f5b3a8" stroke-width="1.5"/><circle cx="482.3" cy="152.1" r="7.00" fill="none" stroke="#cfdc9c" stroke-width="2.0"/><circle cx="527.3" cy="145.5" r="9.25" fill="none" stroke="#58b2e3" stroke-width="1.5"/><circle cx="572.7" cy="145.5" r="9.25" fill="none" stroke="#c6ccd6" stroke-width="1.5"/><circle cx="421.5" cy="150.4" r="7.25" fill="none" stroke="#58b2e3" stroke-width="1.5"/><circle cx="448.8" cy="162.0" r="7.40" fill="none" stroke="#f4b4c7" stroke-width="1.2"/><circle cx="469.4" cy="165.3" r="7.05" fill="none" stroke="#80d8d1" stroke-width="2.5"/><circle cx="514.0" cy="162.8" r="9.25" fill="none" stroke="#58b2e3" stroke-width="1.5"/><circle cx="543.8" cy="159.5" r="10.5" fill="#80d8d1"/><circle cx="543.8" cy="159.5" r="1.2" fill="#f2f2f2"/><circle cx="565.3" cy="165.3" r="9.00" fill="none" stroke="#f5b3a8" stroke-width="2.0"/><circle cx="589.3" cy="159.5" r="10.0" fill="none" stroke="#cfdc9c" stroke-width="1.0"/><circle cx="589.3" cy="159.5" r="7.0" fill="none" stroke="#cfdc9c" stroke-width="1.0"/><circle cx="589.3" cy="159.5" r="4.0" fill="none" stroke="#cfdc9c" stroke-width="1.0"/><circle cx="407.4" cy="169.4" r="7.25" fill="none" stroke="#58b2e3" stroke-width="1.5"/><circle cx="427.3" cy="166.9" r="8.5" fill="#7869c4"/><circle cx="427.3" cy="166.9" r="1.2" fill="#f2f2f2"/><circle cx="444.6" cy="177.7" r="7.40" fill="none" stroke="#f5b3a8" stroke-width="1.2"/><circle cx="490.1" cy="170.2" r="6.75" fill="none" stroke="#f4d23a" stroke-width="7.5"/><circle cx="462.0" cy="183.5" r="7.00" fill="none" stroke="#cfdc9c" stroke-width="2.0"/><circle cx="507.4" cy="182.6" r="9.25" fill="none" stroke="#cfdc9c" stroke-width="1.5"/><circle cx="530.6" cy="176.9" r="10.5" fill="#80d8d1"/><circle cx="530.6" cy="176.9" r="1.2" fill="#f2f2f2"/><circle cx="552.9" cy="186.8" r="10.5" fill="#f4d23a"/><circle cx="552.9" cy="186.8" r="1.2" fill="#f2f2f2"/><circle cx="576.9" cy="183.5" r="10.0" fill="none" stroke="#cfdc9c" stroke-width="1.0"/><circle cx="576.9" cy="183.5" r="7.0" fill="none" stroke="#cfdc9c" stroke-width="1.0"/><circle cx="576.9" cy="183.5" r="4.0" fill="none" stroke="#cfdc9c" stroke-width="1.0"/><circle cx="424.0" cy="183.5" r="5.80" fill="none" stroke="#f4d23a" stroke-width="5.0"/><circle cx="443.8" cy="194.2" r="6.80" fill="none" stroke="#76cbf0" stroke-width="3.0"/><circle cx="482.6" cy="190.1" r="7.00" fill="none" stroke="#f4d23a" stroke-width="7.0"/><circle cx="524.8" cy="195.0" r="7.00" fill="none" stroke="#f4d23a" stroke-width="7.0"/><circle cx="405.0" cy="186.0" r="7.25" fill="none" stroke="#c6ccd6" stroke-width="1.5"/><circle cx="421.5" cy="200.7" r="7.40" fill="none" stroke="#c6ccd6" stroke-width="1.2"/><circle cx="406.6" cy="203.2" r="7.40" fill="none" stroke="#80d8d1" stroke-width="1.2"/><circle cx="458.7" cy="200.7" r="7.25" fill="none" stroke="#cfdc9c" stroke-width="1.5"/><circle cx="499.2" cy="204.9" r="9.25" fill="none" stroke="#80d8d1" stroke-width="1.5"/><circle cx="547.1" cy="208.2" r="8.00" fill="none" stroke="#f4b4c7" stroke-width="4.0"/><circle cx="571.9" cy="207.4" r="7.00" fill="none" stroke="#f4d23a" stroke-width="7.0"/><circle cx="592.6" cy="199.9" r="9.25" fill="none" stroke="#cfdc9c" stroke-width="1.5"/><circle cx="416.5" cy="217.3" r="7.25" fill="none" stroke="#f4b4c7" stroke-width="1.5"/><circle cx="434.7" cy="215.6" r="6.80" fill="none" stroke="#76cbf0" stroke-width="3.0"/><circle cx="454.5" cy="219.8" r="7.50" fill="none" stroke="#7869c4" stroke-width="5.0"/><circle cx="477.7" cy="212.8" r="10.5" fill="#22a0e0"/><circle cx="477.7" cy="212.8" r="1.2" fill="#f2f2f2"/><circle cx="518.2" cy="219.8" r="6.75" fill="none" stroke="#f4d23a" stroke-width="7.5"/><circle cx="540.5" cy="228.8" r="8.00" fill="none" stroke="#f4b4c7" stroke-width="4.0"/><circle cx="588.4" cy="221.4" r="10.5" fill="#76cbf0"/><circle cx="588.4" cy="221.4" r="1.2" fill="#f2f2f2"/><circle cx="413.2" cy="234.6" r="7.25" fill="none" stroke="#cfdc9c" stroke-width="1.5"/><circle cx="432.2" cy="232.1" r="7.25" fill="none" stroke="#cfdc9c" stroke-width="1.5"/><circle cx="471.1" cy="233.8" r="9.25" fill="none" stroke="#cfdc9c" stroke-width="1.5"/><circle cx="495.0" cy="226.7" r="10.5" fill="#80d8d1"/><circle cx="495.0" cy="226.7" r="1.2" fill="#f2f2f2"/><circle cx="512.4" cy="240.4" r="10.5" fill="#80d8d1"/><circle cx="512.4" cy="240.4" r="1.2" fill="#f2f2f2"/><circle cx="565.3" cy="229.7" r="9.25" fill="none" stroke="#58b2e3" stroke-width="1.5"/><circle cx="582.6" cy="240.4" r="9.25" fill="none" stroke="#cfdc9c" stroke-width="1.5"/><circle cx="448.8" cy="242.1" r="7.00" fill="none" stroke="#f4d23a" stroke-width="7.0"/><circle cx="410.7" cy="250.3" r="6.80" fill="none" stroke="#76cbf0" stroke-width="3.0"/><circle cx="429.8" cy="248.7" r="7.25" fill="none" stroke="#cfdc9c" stroke-width="1.5"/><circle cx="466.9" cy="254.5" r="7.75" fill="none" stroke="#f4d23a" stroke-width="5.5"/><circle cx="489.3" cy="247.9" r="10.5" fill="#80d8d1"/><circle cx="489.3" cy="247.9" r="1.2" fill="#f2f2f2"/><circle cx="534.7" cy="250.3" r="6.75" fill="none" stroke="#80d8d1" stroke-width="7.5"/><circle cx="560.3" cy="250.3" r="10.5" fill="#f4d23a"/><circle cx="560.3" cy="250.3" r="1.2" fill="#f2f2f2"/><circle cx="597.5" cy="254.5" r="7.50" fill="none" stroke="#76cbf0" stroke-width="5.0"/><circle cx="444.6" cy="263.6" r="10.5" fill="#22a0e0"/><circle cx="444.6" cy="263.6" r="1.2" fill="#f2f2f2"/><circle cx="423.1" cy="265.2" r="7.25" fill="none" stroke="#cfdc9c" stroke-width="1.5"/><circle cx="507.1" cy="261.9" r="10.5" fill="#f4d23a"/><circle cx="507.1" cy="261.9" r="1.2" fill="#f2f2f2"/><circle cx="484.3" cy="269.3" r="7.50" fill="none" stroke="#f4d23a" stroke-width="6.0"/><circle cx="541.3" cy="271.0" r="9.25" fill="none" stroke="#58b2e3" stroke-width="1.5"/><circle cx="564.5" cy="271.8" r="10.5" fill="#76cbf0"/><circle cx="564.5" cy="271.8" r="1.2" fill="#f2f2f2"/><circle cx="586.8" cy="274.3" r="8.50" fill="none" stroke="#76cbf0" stroke-width="4.0"/><circle cx="409.9" cy="277.6" r="7.00" fill="none" stroke="#cfdc9c" stroke-width="2.0"/><circle cx="462.0" cy="277.6" r="10.5" fill="#80d8d1"/><circle cx="462.0" cy="277.6" r="1.2" fill="#f2f2f2"/><circle cx="433.1" cy="283.4" r="9.25" fill="none" stroke="#cfdc9c" stroke-width="1.5"/><circle cx="514.0" cy="282.6" r="6.75" fill="none" stroke="#80d8d1" stroke-width="7.5"/><circle cx="491.7" cy="290.5" r="10.5" fill="#f4d23a"/><circle cx="491.7" cy="290.5" r="1.2" fill="#f2f2f2"/><circle cx="548.8" cy="291.2" r="10.5" fill="#76cbf0"/><circle cx="548.8" cy="291.2" r="1.2" fill="#f2f2f2"/><circle cx="573.6" cy="290.8" r="8.00" fill="none" stroke="#76cbf0" stroke-width="5.0"/><circle cx="404.1" cy="293.3" r="7.25" fill="none" stroke="#58b2e3" stroke-width="1.5"/><circle cx="442.1" cy="304.0" r="7.50" fill="none" stroke="#f4d23a" stroke-width="6.0"/><circle cx="470.2" cy="299.1" r="6.75" fill="none" stroke="#f4d23a" stroke-width="7.5"/><circle cx="521.5" cy="304.0" r="9.25" fill="none" stroke="#58b2e3" stroke-width="1.5"/><circle cx="556.2" cy="313.1" r="8.00" fill="none" stroke="#7869c4" stroke-width="4.0"/><circle cx="581.0" cy="312.3" r="9.25" fill="none" stroke="#f4b4c7" stroke-width="1.5"/><circle cx="414.0" cy="309.8" r="9.25" fill="none" stroke="#80d8d1" stroke-width="1.5"/><circle cx="500.0" cy="312.0" r="10.5" fill="#80d8d1"/><circle cx="500.0" cy="312.0" r="2.5" fill="#e2e2e2"/><circle cx="479.3" cy="320.6" r="10.5" fill="#f4d23a"/><circle cx="479.3" cy="320.6" r="1.2" fill="#f2f2f2"/><circle cx="534.7" cy="321.4" r="10.5" fill="#76cbf0"/><circle cx="534.7" cy="321.4" r="1.2" fill="#f2f2f2"/><circle cx="451.2" cy="326.4" r="10.5" fill="#80d8d1"/><circle cx="451.2" cy="326.4" r="1.2" fill="#f2f2f2"/><circle cx="422.3" cy="331.3" r="9.25" fill="none" stroke="#58b2e3" stroke-width="1.5"/><circle cx="509.9" cy="329.7" r="9.25" fill="none" stroke="#58b2e3" stroke-width="1.5"/><circle cx="493.4" cy="337.9" r="10.0" fill="none" stroke="#cfdc9c" stroke-width="1.0"/><circle cx="493.4" cy="337.9" r="7.0" fill="none" stroke="#cfdc9c" stroke-width="1.0"/><circle cx="493.4" cy="337.9" r="4.0" fill="none" stroke="#cfdc9c" stroke-width="1.0"/><circle cx="530.6" cy="342.9" r="10.0" fill="none" stroke="#80d8d1" stroke-width="1.0"/><circle cx="530.6" cy="342.9" r="7.0" fill="none" stroke="#80d8d1" stroke-width="1.0"/><circle cx="530.6" cy="342.9" r="4.0" fill="none" stroke="#80d8d1" stroke-width="1.0"/><circle cx="552.1" cy="335.5" r="8.75" fill="none" stroke="#f5b3a8" stroke-width="2.5"/><circle cx="575.2" cy="331.3" r="9.25" fill="none" stroke="#c6ccd6" stroke-width="1.5"/><circle cx="465.3" cy="343.7" r="10.5" fill="#80d8d1"/><circle cx="465.3" cy="343.7" r="1.2" fill="#f2f2f2"/><circle cx="436.4" cy="348.7" r="9.25" fill="none" stroke="#58b2e3" stroke-width="1.5"/><circle cx="481.8" cy="356.9" r="10.0" fill="none" stroke="#f4b4c7" stroke-width="1.0"/><circle cx="481.8" cy="356.9" r="7.0" fill="none" stroke="#f4b4c7" stroke-width="1.0"/><circle cx="481.8" cy="356.9" r="4.0" fill="none" stroke="#f4b4c7" stroke-width="1.0"/><circle cx="508.3" cy="348.7" r="9.25" fill="none" stroke="#80d8d1" stroke-width="1.5"/><circle cx="565.3" cy="352.8" r="9.25" fill="none" stroke="#c6ccd6" stroke-width="1.5"/><circle cx="544.6" cy="359.4" r="8.75" fill="none" stroke="#f5b3a8" stroke-width="2.5"/><circle cx="593.4" cy="347.9" r="9.25" fill="none" stroke="#58b2e3" stroke-width="1.5"/><circle cx="409.1" cy="353.6" r="9.25" fill="none" stroke="#80d8d1" stroke-width="1.5"/><circle cx="424.8" cy="367.7" r="9.25" fill="none" stroke="#7869c4" stroke-width="1.5"/><circle cx="453.7" cy="362.7" r="10.5" fill="#80d8d1"/><circle cx="453.7" cy="362.7" r="1.2" fill="#f2f2f2"/><circle cx="524.3" cy="367.7" r="7.00" fill="none" stroke="#f4d23a" stroke-width="7.0"/><circle cx="581.8" cy="363.6" r="9.25" fill="none" stroke="#58b2e3" stroke-width="1.5"/><circle cx="495.0" cy="368.5" r="9.25" fill="none" stroke="#58b2e3" stroke-width="1.5"/><circle cx="467.8" cy="378.4" r="9.25" fill="none" stroke="#80d8d1" stroke-width="1.5"/><circle cx="438.8" cy="381.7" r="10.5" fill="#f4d23a"/><circle cx="438.8" cy="381.7" r="2.5" fill="#e2e2e2"/><circle cx="541.3" cy="380.9" r="10.5" fill="#76cbf0"/><circle cx="541.3" cy="380.9" r="1.2" fill="#f2f2f2"/><circle cx="559.5" cy="374.3" r="9.25" fill="none" stroke="#cfdc9c" stroke-width="1.5"/><circle cx="412.4" cy="388.3" r="7.50" fill="none" stroke="#76cbf0" stroke-width="5.0"/><circle cx="510.0" cy="388.0" r="7.00" fill="none" stroke="#f4d23a" stroke-width="7.0"/><circle cx="593.4" cy="382.6" r="9.25" fill="none" stroke="#58b2e3" stroke-width="1.5"/><circle cx="483.5" cy="393.2" r="9.25" fill="none" stroke="#cfdc9c" stroke-width="1.5"/><circle cx="571.1" cy="394.9" r="9.40" fill="none" stroke="#80d8d1" stroke-width="1.2"/><circle cx="456.2" cy="399.0" r="9.40" fill="none" stroke="#80d8d1" stroke-width="1.2"/><circle cx="430.6" cy="404.8" r="7.50" fill="none" stroke="#f4d23a" stroke-width="6.0"/><circle cx="449.6" cy="420.5" r="9.25" fill="none" stroke="#58b2e3" stroke-width="1.5"/><circle cx="471.1" cy="418.8" r="9.25" fill="none" stroke="#cfdc9c" stroke-width="1.5"/><circle cx="494.2" cy="416.4" r="8.00" fill="none" stroke="#76cbf0" stroke-width="5.0"/><circle cx="521.5" cy="409.8" r="8.75" fill="none" stroke="#f3ab58" stroke-width="2.5"/><circle cx="549.6" cy="405.6" r="9.40" fill="none" stroke="#80d8d1" stroke-width="1.2"/><circle cx="579.3" cy="418.0" r="9.25" fill="none" stroke="#58b2e3" stroke-width="1.5"/><circle cx="597.5" cy="408.9" r="7.00" fill="none" stroke="#f4d23a" stroke-width="7.0"/><circle cx="426.4" cy="432.9" r="7.00" fill="none" stroke="#f4d23a" stroke-width="7.0"/><circle cx="405.0" cy="432.9" r="7.50" fill="none" stroke="#76cbf0" stroke-width="5.0"/><circle cx="449.6" cy="442.0" r="9.40" fill="none" stroke="#80d8d1" stroke-width="1.2"/><circle cx="471.1" cy="440.3" r="9.25" fill="none" stroke="#cfdc9c" stroke-width="1.5"/><circle cx="505.0" cy="437.9" r="10.5" fill="#80d8d1"/><circle cx="505.0" cy="437.9" r="1.2" fill="#f2f2f2"/><circle cx="532.2" cy="432.1" r="9.25" fill="none" stroke="#f4b4c7" stroke-width="1.5"/><circle cx="558.7" cy="426.3" r="7.50" fill="none" stroke="#f4d23a" stroke-width="6.0"/><circle cx="587.6" cy="438.7" r="7.00" fill="none" stroke="#f4d23a" stroke-width="7.0"/><circle cx="417.4" cy="451.9" r="7.00" fill="none" stroke="#f4d23a" stroke-width="7.0"/><circle cx="440.5" cy="462.6" r="10.5" fill="#f4d23a"/><circle cx="440.5" cy="462.6" r="1.2" fill="#f2f2f2"/><circle cx="462.8" cy="462.6" r="10.5" fill="#22a0e0"/><circle cx="462.8" cy="462.6" r="1.2" fill="#f2f2f2"/><circle cx="486.0" cy="459.3" r="7.75" fill="none" stroke="#22a0e0" stroke-width="5.5"/><circle cx="516.5" cy="460.2" r="7.25" fill="none" stroke="#22a0e0" stroke-width="6.5"/><circle cx="543.0" cy="453.6" r="7.25" fill="none" stroke="#22a0e0" stroke-width="6.5"/><circle cx="567.8" cy="453.6" r="9.25" fill="none" stroke="#c6ccd6" stroke-width="1.5"/><circle cx="595.0" cy="461.0" r="9.25" fill="none" stroke="#f4b4c7" stroke-width="1.5"/><circle cx="417.4" cy="476.7" r="7.00" fill="none" stroke="#f4d23a" stroke-width="7.0"/><circle cx="435.5" cy="489.9" r="10.5" fill="#f4d23a"/><circle cx="435.5" cy="489.9" r="1.2" fill="#f2f2f2"/><circle cx="462.8" cy="483.8" r="9.25" fill="none" stroke="#cfdc9c" stroke-width="1.5"/><circle cx="485.1" cy="481.2" r="7.00" fill="none" stroke="#f4d23a" stroke-width="7.0"/><circle cx="530.6" cy="479.2" r="9.25" fill="none" stroke="#80d8d1" stroke-width="1.5"/><circle cx="557.0" cy="473.4" r="9.25" fill="none" stroke="#c6ccd6" stroke-width="1.5"/><circle cx="579.3" cy="475.9" r="9.25" fill="none" stroke="#f5b3a8" stroke-width="1.5"/><circle cx="407.4" cy="496.5" r="7.00" fill="none" stroke="#f4d23a" stroke-width="7.0"/><circle cx="508.3" cy="491.6" r="7.25" fill="none" stroke="#22a0e0" stroke-width="6.5"/><circle cx="530.6" cy="501.5" r="7.50" fill="none" stroke="#22a0e0" stroke-width="6.0"/><circle cx="556.2" cy="494.9" r="9.25" fill="none" stroke="#cfdc9c" stroke-width="1.5"/><circle cx="579.3" cy="497.4" r="7.00" fill="none" stroke="#f4d23a" stroke-width="7.0"/><circle cx="410.7" cy="518.0" r="9.25" fill="none" stroke="#58b2e3" stroke-width="1.5"/><circle cx="435.5" cy="511.4" r="10.0" fill="none" stroke="#80d8d1" stroke-width="1.2"/><circle cx="435.5" cy="511.4" r="7.0" fill="none" stroke="#80d8d1" stroke-width="1.2"/><circle cx="435.5" cy="511.4" r="4.0" fill="none" stroke="#80d8d1" stroke-width="1.2"/><circle cx="462.0" cy="506.4" r="10.5" fill="#80d8d1"/><circle cx="462.0" cy="506.4" r="1.2" fill="#f2f2f2"/><circle cx="483.5" cy="508.1" r="7.00" fill="none" stroke="#f4d23a" stroke-width="7.0"/><circle cx="500.0" cy="523.0" r="7.50" fill="none" stroke="#22a0e0" stroke-width="6.0"/><circle cx="545.5" cy="520.5" r="9.25" fill="none" stroke="#c6ccd6" stroke-width="1.5"/><circle cx="567.8" cy="518.0" r="7.00" fill="none" stroke="#f4d23a" stroke-width="7.0"/><circle cx="588.4" cy="519.7" r="9.00" fill="none" stroke="#f5b3a8" stroke-width="2.0"/><circle cx="474.4" cy="532.1" r="7.00" fill="none" stroke="#f4d23a" stroke-width="7.0"/><circle cx="523.1" cy="532.9" r="7.25" fill="none" stroke="#22a0e0" stroke-width="6.5"/><circle cx="449.6" cy="534.5" r="9.25" fill="none" stroke="#58b2e3" stroke-width="1.5"/><circle cx="424.8" cy="541.2" r="10.5" fill="#f4d23a"/><circle cx="424.8" cy="541.2" r="1.2" fill="#f2f2f2"/><circle cx="546.3" cy="542.8" r="9.25" fill="none" stroke="#80d8d1" stroke-width="1.5"/><circle cx="580.2" cy="539.5" r="9.00" fill="none" stroke="#f5b3a8" stroke-width="2.0"/><circle cx="462.8" cy="556.9" r="9.25" fill="none" stroke="#f5b3a8" stroke-width="1.5"/><circle cx="488.4" cy="551.1" r="8.50" fill="none" stroke="#f3ab58" stroke-width="3.0"/><circle cx="509.9" cy="553.6" r="8.00" fill="none" stroke="#80d8d1" stroke-width="5.0"/><circle cx="411.6" cy="561.0" r="9.25" fill="none" stroke="#80d8d1" stroke-width="1.5"/><circle cx="438.0" cy="563.5" r="7.50" fill="none" stroke="#7869c4" stroke-width="6.0"/><circle cx="525.6" cy="563.5" r="9.25" fill="none" stroke="#c6ccd6" stroke-width="1.5"/><circle cx="559.5" cy="564.3" r="7.75" fill="none" stroke="#f4d23a" stroke-width="5.5"/><circle cx="582.6" cy="567.6" r="10.5" fill="#22a0e0"/><circle cx="582.6" cy="567.6" r="1.2" fill="#f2f2f2"/><circle cx="501.7" cy="572.6" r="7.50" fill="none" stroke="#80d8d1" stroke-width="6.0"/><circle cx="405.0" cy="583.2" r="9.25" fill="none" stroke="#c6ccd6" stroke-width="1.5"/><circle cx="424.5" cy="584.9" r="10.5" fill="#f4d23a"/><circle cx="424.5" cy="584.9" r="1.2" fill="#f2f2f2"/><circle cx="450.4" cy="586.5" r="10.5" fill="#80d8d1"/><circle cx="450.4" cy="586.5" r="1.2" fill="#f2f2f2"/><circle cx="475.7" cy="580.7" r="10.5" fill="#80d8d1"/><circle cx="475.7" cy="580.7" r="2.0" fill="#e2e2e2"/><circle cx="515.7" cy="597.3" r="7.00" fill="none" stroke="#80d8d1" stroke-width="7.0"/><circle cx="540.5" cy="590.7" r="9.25" fill="none" stroke="#cfdc9c" stroke-width="1.5"/><circle cx="573.6" cy="588.2" r="10.5" fill="#22a0e0"/><circle cx="573.6" cy="588.2" r="1.2" fill="#f2f2f2"/><circle cx="593.4" cy="585.7" r="9.25" fill="none" stroke="#c6ccd6" stroke-width="1.5"/><circle cx="415.7" cy="605.5" r="10.5" fill="#f4d23a"/><circle cx="415.7" cy="605.5" r="1.2" fill="#f2f2f2"/><circle cx="438.8" cy="606.4" r="7.50" fill="none" stroke="#7869c4" stroke-width="6.0"/><circle cx="463.6" cy="609.7" r="7.25" fill="none" stroke="#f4d23a" stroke-width="6.5"/><circle cx="489.3" cy="603.1" r="8.50" fill="none" stroke="#80d8d1" stroke-width="3.0"/><circle cx="553.7" cy="613.8" r="7.25" fill="none" stroke="#f4d23a" stroke-width="6.5"/><circle cx="576.0" cy="616.3" r="10.5" fill="#22a0e0"/><circle cx="576.0" cy="616.3" r="1.2" fill="#f2f2f2"/><circle cx="594.2" cy="605.5" r="10.5" fill="#22a0e0"/><circle cx="594.2" cy="605.5" r="1.2" fill="#f2f2f2"/><circle cx="431.4" cy="627.9" r="7.50" fill="none" stroke="#7869c4" stroke-width="6.0"/><circle cx="452.9" cy="630.3" r="10.5" fill="#80d8d1"/><circle cx="452.9" cy="630.3" r="1.2" fill="#f2f2f2"/><circle cx="480.2" cy="631.2" r="8.75" fill="none" stroke="#f5b3a8" stroke-width="2.5"/><circle cx="503.3" cy="626.2" r="9.00" fill="none" stroke="#58b2e3" stroke-width="2.0"/><circle cx="528.1" cy="619.6" r="9.40" fill="none" stroke="#f4b4c7" stroke-width="1.2"/><circle cx="543.8" cy="642.7" r="7.50" fill="none" stroke="#76cbf0" stroke-width="6.0"/><circle cx="567.8" cy="636.1" r="8.00" fill="none" stroke="#76cbf0" stroke-width="5.0"/><circle cx="591.7" cy="639.4" r="8.00" fill="none" stroke="#76cbf0" stroke-width="5.0"/><circle cx="416.5" cy="642.7" r="10.5" fill="#76cbf0"/><circle cx="416.5" cy="642.7" r="1.2" fill="#f2f2f2"/><circle cx="438.3" cy="648.5" r="10.5" fill="#7869c4"/><circle cx="438.3" cy="648.5" r="1.2" fill="#f2f2f2"/><circle cx="458.7" cy="651.0" r="9.00" fill="none" stroke="#f5b3a8" stroke-width="2.0"/><circle cx="486.0" cy="651.8" r="8.75" fill="none" stroke="#80d8d1" stroke-width="3.5"/><circle cx="519.0" cy="649.3" r="9.00" fill="none" stroke="#f5b3a8" stroke-width="2.0"/><circle cx="585.1" cy="660.1" r="8.00" fill="none" stroke="#76cbf0" stroke-width="5.0"/><circle cx="423.1" cy="663.9" r="10.5" fill="#f4d23a"/><circle cx="423.1" cy="663.9" r="1.2" fill="#f2f2f2"/><circle cx="466.1" cy="671.7" r="7.25" fill="none" stroke="#f4d23a" stroke-width="6.5"/><circle cx="504.1" cy="665.5" r="7.25" fill="none" stroke="#80d8d1" stroke-width="6.5"/><circle cx="538.8" cy="670.0" r="9.25" fill="none" stroke="#58b2e3" stroke-width="1.5"/><circle cx="560.0" cy="665.5" r="10.5" fill="#76cbf0"/><circle cx="560.0" cy="665.5" r="1.2" fill="#f2f2f2"/><circle cx="440.5" cy="678.3" r="10.5" fill="#7869c4"/><circle cx="440.5" cy="678.3" r="1.2" fill="#f2f2f2"/><circle cx="416.5" cy="684.9" r="10.5" fill="#f4d23a"/><circle cx="416.5" cy="684.9" r="1.2" fill="#f2f2f2"/><circle cx="497.5" cy="684.9" r="7.75" fill="none" stroke="#80d8d1" stroke-width="5.5"/><circle cx="519.8" cy="681.6" r="8.25" fill="none" stroke="#76cbf0" stroke-width="4.5"/><circle cx="575.2" cy="679.9" r="8.50" fill="none" stroke="#76cbf0" stroke-width="4.0"/><circle cx="595.9" cy="682.4" r="7.50" fill="none" stroke="#22a0e0" stroke-width="6.0"/><circle cx="472.7" cy="691.5" r="8.50" fill="none" stroke="#f4b4c7" stroke-width="3.0"/><circle cx="543.5" cy="691.5" r="8.25" fill="none" stroke="#76cbf0" stroke-width="4.5"/><circle cx="447.9" cy="698.9" r="10.5" fill="#f4b4c7"/><circle cx="447.9" cy="698.9" r="1.2" fill="#f2f2f2"/><circle cx="423.1" cy="704.7" r="7.25" fill="none" stroke="#f4d23a" stroke-width="6.5"/><circle cx="503.3" cy="707.2" r="10.5" fill="#80d8d1"/><circle cx="503.3" cy="707.2" r="1.2" fill="#f2f2f2"/><circle cx="527.3" cy="708.8" r="8.00" fill="none" stroke="#76cbf0" stroke-width="5.0"/><circle cx="567.0" cy="701.4" r="8.25" fill="none" stroke="#76cbf0" stroke-width="4.5"/><circle cx="591.7" cy="703.1" r="8.25" fill="none" stroke="#76cbf0" stroke-width="4.5"/><circle cx="479.3" cy="712.1" r="8.25" fill="none" stroke="#f3ab58" stroke-width="3.5"/><circle cx="455.4" cy="719.6" r="9.00" fill="none" stroke="#7869c4" stroke-width="2.0"/><circle cx="431.4" cy="726.2" r="7.50" fill="none" stroke="#7869c4" stroke-width="6.0"/><circle cx="543.8" cy="723.7" r="8.00" fill="none" stroke="#76cbf0" stroke-width="5.0"/><circle cx="589.3" cy="723.7" r="8.50" fill="none" stroke="#76cbf0" stroke-width="4.0"/><circle cx="495.0" cy="736.1" r="7.25" fill="none" stroke="#80d8d1" stroke-width="6.5"/><circle cx="519.8" cy="729.5" r="8.00" fill="none" stroke="#76cbf0" stroke-width="5.0"/><circle cx="567.8" cy="733.6" r="8.25" fill="none" stroke="#76cbf0" stroke-width="4.5"/><circle cx="463.6" cy="739.4" r="7.25" fill="none" stroke="#f4d23a" stroke-width="6.5"/><circle cx="439.7" cy="745.2" r="9.00" fill="none" stroke="#80d8d1" stroke-width="3.0"/><circle cx="407.4" cy="748.5" r="10.5" fill="#76cbf0"/><circle cx="407.4" cy="748.5" r="1.2" fill="#f2f2f2"/><circle cx="530.6" cy="749.3" r="7.25" fill="none" stroke="#f3ab58" stroke-width="6.5"/><circle cx="556.2" cy="751.8" r="9.25" fill="none" stroke="#58b2e3" stroke-width="1.5"/><circle cx="590.1" cy="752.6" r="8.00" fill="none" stroke="#76cbf0" stroke-width="5.0"/><circle cx="473.6" cy="758.4" r="8.75" fill="none" stroke="#f4b4c7" stroke-width="2.5"/><circle cx="507.4" cy="756.0" r="10.5" fill="#80d8d1"/><circle cx="507.4" cy="756.0" r="2.0" fill="#e2e2e2"/><circle cx="418.2" cy="765.9" r="10.5" fill="#f4d23a"/><circle cx="418.2" cy="765.9" r="1.2" fill="#f2f2f2"/><circle cx="450.4" cy="764.2" r="10.5" fill="#80d8d1"/><circle cx="450.4" cy="764.2" r="1.2" fill="#f2f2f2"/><circle cx="573.6" cy="764.2" r="8.00" fill="none" stroke="#76cbf0" stroke-width="5.0"/><circle cx="485.1" cy="778.2" r="8.50" fill="none" stroke="#f3ab58" stroke-width="3.0"/><circle cx="517.7" cy="775.2" r="10.5" fill="#f3ab58"/><circle cx="517.7" cy="775.2" r="1.2" fill="#f2f2f2"/><circle cx="550.4" cy="772.4" r="9.25" fill="none" stroke="#7869c4" stroke-width="1.5"/><circle cx="429.4" cy="787.3" r="7.00" fill="none" stroke="#f4d23a" stroke-width="7.0"/><circle cx="460.8" cy="784.8" r="9.00" fill="none" stroke="#7869c4" stroke-width="2.0"/><circle cx="495.9" cy="796.4" r="8.50" fill="none" stroke="#80d8d1" stroke-width="4.0"/><circle cx="516.5" cy="795.5" r="7.75" fill="none" stroke="#f5b3a8" stroke-width="1.5"/><circle cx="536.9" cy="789.8" r="8.50" fill="none" stroke="#76cbf0" stroke-width="4.0"/><circle cx="565.3" cy="783.1" r="6.00" fill="none" stroke="#76cbf0" stroke-width="5.0"/><circle cx="576.9" cy="798.8" r="8.00" fill="none" stroke="#76cbf0" stroke-width="5.0"/><circle cx="594.2" cy="788.9" r="8.25" fill="none" stroke="#76cbf0" stroke-width="4.5"/><circle cx="408.3" cy="809.6" r="10.5" fill="#80d8d1"/><circle cx="408.3" cy="809.6" r="1.2" fill="#f2f2f2"/><circle cx="439.7" cy="806.3" r="7.50" fill="none" stroke="#7869c4" stroke-width="6.0"/><circle cx="472.7" cy="803.8" r="7.25" fill="none" stroke="#f4d23a" stroke-width="6.5"/><circle cx="506.6" cy="817.0" r="7.75" fill="none" stroke="#80d8d1" stroke-width="5.5"/><circle cx="530.6" cy="810.4" r="9.25" fill="none" stroke="#cfdc9c" stroke-width="1.5"/><circle cx="554.5" cy="803.8" r="9.40" fill="none" stroke="#f4b4c7" stroke-width="1.2"/><circle cx="569.9" cy="816.2" r="8.5" fill="#80d8d1"/><circle cx="569.9" cy="816.2" r="1.2" fill="#f2f2f2"/><circle cx="450.4" cy="826.1" r="9.25" fill="none" stroke="#f4b4c7" stroke-width="1.5"/><circle cx="481.8" cy="822.0" r="8.75" fill="none" stroke="#f4b4c7" stroke-width="2.5"/><circle cx="522.0" cy="828.6" r="8.5" fill="#22a0e0"/><circle cx="522.0" cy="828.6" r="2.0" fill="#e2e2e2"/><circle cx="545.5" cy="824.1" r="8.5" fill="#f4d23a"/><circle cx="545.5" cy="824.1" r="1.2" fill="#f2f2f2"/><circle cx="583.5" cy="829.4" r="8.00" fill="none" stroke="#f4d23a" stroke-width="5.0"/><circle cx="418.2" cy="828.6" r="10.5" fill="#76cbf0"/><circle cx="418.2" cy="828.6" r="2.5" fill="#e2e2e2"/><circle cx="497.5" cy="836.0" r="6.55" fill="none" stroke="#76cbf0" stroke-width="3.5"/><circle cx="536.4" cy="842.6" r="9.00" fill="none" stroke="#cfdc9c" stroke-width="2.0"/><circle cx="560.3" cy="836.0" r="9.25" fill="none" stroke="#f4b4c7" stroke-width="1.5"/><circle cx="430.1" cy="847.6" r="10.5" fill="#f4d23a"/><circle cx="430.1" cy="847.6" r="1.2" fill="#f2f2f2"/><circle cx="462.5" cy="844.6" r="10.5" fill="#80d8d1"/><circle cx="462.5" cy="844.6" r="1.2" fill="#f2f2f2"/><circle cx="490.1" cy="854.2" r="8.75" fill="none" stroke="#f4b4c7" stroke-width="2.5"/><circle cx="513.2" cy="848.4" r="7.00" fill="none" stroke="#80d8d1" stroke-width="7.0"/><circle cx="550.4" cy="861.7" r="7.75" fill="none" stroke="#22a0e0" stroke-width="5.5"/><circle cx="573.6" cy="855.0" r="9.25" fill="none" stroke="#cfdc9c" stroke-width="1.5"/><circle cx="406.6" cy="853.4" r="9.25" fill="none" stroke="#cfdc9c" stroke-width="1.5"/><circle cx="443.0" cy="865.8" r="8.50" fill="none" stroke="#f4b4c7" stroke-width="3.0"/><circle cx="419.0" cy="873.2" r="10.0" fill="none" stroke="#f5b3a8" stroke-width="1.0"/><circle cx="419.0" cy="873.2" r="7.0" fill="none" stroke="#f5b3a8" stroke-width="1.0"/><circle cx="419.0" cy="873.2" r="4.0" fill="none" stroke="#f5b3a8" stroke-width="1.0"/><circle cx="471.1" cy="876.5" r="10.5" fill="#80d8d1"/><circle cx="471.1" cy="876.5" r="1.2" fill="#f2f2f2"/><circle cx="503.3" cy="873.2" r="7.00" fill="none" stroke="#f4d23a" stroke-width="7.0"/><circle cx="526.9" cy="867.1" r="10.5" fill="#80d8d1"/><circle cx="526.9" cy="867.1" r="1.2" fill="#f2f2f2"/><circle cx="572.7" cy="883.1" r="9.25" fill="none" stroke="#f4b4c7" stroke-width="1.5"/><circle cx="435.5" cy="886.4" r="8.5" fill="#80d8d1"/><circle cx="435.5" cy="886.4" r="1.2" fill="#f2f2f2"/><circle cx="450.4" cy="897.2" r="8.50" fill="none" stroke="#f4b4c7" stroke-width="3.0"/><circle cx="427.3" cy="903.8" r="10.0" fill="none" stroke="#f5b3a8" stroke-width="1.0"/><circle cx="427.3" cy="903.8" r="7.0" fill="none" stroke="#f5b3a8" stroke-width="1.0"/><circle cx="427.3" cy="903.8" r="4.0" fill="none" stroke="#f5b3a8" stroke-width="1.0"/><circle cx="484.3" cy="894.7" r="10.5" fill="#22a0e0"/><circle cx="484.3" cy="894.7" r="4.0" fill="none" stroke="#a8dcf4" stroke-width="0.6"/><circle cx="516.5" cy="892.2" r="9.25" fill="none" stroke="#58b2e3" stroke-width="1.5"/><circle cx="540.5" cy="886.4" r="10.5" fill="#f3ab58"/><circle cx="540.5" cy="886.4" r="1.2" fill="#f2f2f2"/><circle cx="585.9" cy="902.1" r="8.75" fill="none" stroke="#cfdc9c" stroke-width="2.5"/><circle cx="529.8" cy="911.2" r="7.00" fill="none" stroke="#80d8d1" stroke-width="7.0"/><circle cx="553.7" cy="905.5" r="7.50" fill="none" stroke="#80d8d1" stroke-width="6.0"/><circle cx="464.5" cy="917.0" r="7.50" fill="none" stroke="#7869c4" stroke-width="6.0"/><circle cx="496.7" cy="913.7" r="7.25" fill="none" stroke="#f4d23a" stroke-width="6.5"/><circle cx="442.1" cy="922.8" r="10.5" fill="#f4d23a"/><circle cx="442.1" cy="922.8" r="2.5" fill="#e2e2e2"/><circle cx="409.9" cy="926.1" r="9.00" fill="none" stroke="#f5b3a8" stroke-width="2.0"/><circle cx="567.8" cy="922.8" r="7.00" fill="none" stroke="#f4b4c7" stroke-width="7.0"/><circle cx="597.5" cy="919.5" r="10.5" fill="#76cbf0"/><circle cx="597.5" cy="919.5" r="1.2" fill="#f2f2f2"/><circle cx="543.8" cy="930.2" r="10.5" fill="#80d8d1"/><circle cx="543.8" cy="930.2" r="1.2" fill="#f2f2f2"/><circle cx="476.9" cy="935.2" r="9.25" fill="none" stroke="#f4b4c7" stroke-width="1.5"/><circle cx="454.5" cy="941.0" r="9.25" fill="none" stroke="#80d8d1" stroke-width="1.5"/><circle cx="509.9" cy="933.6" r="8.75" fill="none" stroke="#f4b4c7" stroke-width="2.5"/><circle cx="583.5" cy="941.0" r="7.50" fill="none" stroke="#22a0e0" stroke-width="6.0"/><circle cx="421.5" cy="945.1" r="7.50" fill="none" stroke="#f4b4c7" stroke-width="6.0"/><circle cx="492.6" cy="952.6" r="10.0" fill="none" stroke="#7869c4" stroke-width="1.2"/><circle cx="492.6" cy="952.6" r="7.0" fill="none" stroke="#7869c4" stroke-width="1.2"/><circle cx="492.6" cy="952.6" r="4.0" fill="none" stroke="#7869c4" stroke-width="1.2"/><circle cx="525.6" cy="951.7" r="8.50" fill="none" stroke="#80d8d1" stroke-width="3.0"/><circle cx="559.5" cy="947.6" r="10.5" fill="#76cbf0"/><circle cx="559.5" cy="947.6" r="1.2" fill="#f2f2f2"/><circle cx="468.8" cy="960.6" r="8.75" fill="none" stroke="#f4b4c7" stroke-width="2.5"/><circle cx="434.7" cy="964.1" r="9.00" fill="none" stroke="#58b2e3" stroke-width="2.0"/><circle cx="508.7" cy="972.2" r="9.00" fill="none" stroke="#58b2e3" stroke-width="2.0"/><circle cx="542.3" cy="969.3" r="7.25" fill="none" stroke="#f4d23a" stroke-width="6.5"/><circle cx="571.8" cy="977.4" r="10.5" fill="#76cbf0"/><circle cx="571.8" cy="977.4" r="1.2" fill="#f2f2f2"/><circle cx="593.2" cy="971.6" r="7.75" fill="none" stroke="#22a0e0" stroke-width="5.5"/><circle cx="417.9" cy="984.9" r="9.00" fill="none" stroke="#cfdc9c" stroke-width="2.0"/><circle cx="451.5" cy="981.4" r="9.00" fill="none" stroke="#58b2e3" stroke-width="2.0"/><circle cx="484.4" cy="978.5" r="9.25" fill="none" stroke="#f5b3a8" stroke-width="1.5"/><circle cx="524.3" cy="990.1" r="9.25" fill="none" stroke="#80d8d1" stroke-width="1.5"/><circle cx="500.6" cy="995.9" r="9.25" fill="none" stroke="#f4b4c7" stroke-width="1.5"/><circle cx="439.3" cy="1000.0" r="9.00" fill="none" stroke="#f5b3a8" stroke-width="2.0"/><circle cx="467.1" cy="1000.0" r="9.00" fill="none" stroke="#58b2e3" stroke-width="2.0"/><circle cx="554.4" cy="998.8" r="7.25" fill="none" stroke="#f4d23a" stroke-width="6.5"/><circle cx="588.0" cy="995.9" r="7.50" fill="none" stroke="#22a0e0" stroke-width="6.0"/><circle cx="409.8" cy="1002.8" r="5.75" fill="none" stroke="#f4d23a" stroke-width="5.5"/><circle cx="644.1" cy="10.0" r="10.5" fill="#f4d23a"/><circle cx="644.1" cy="10.0" r="1.2" fill="#f2f2f2"/><circle cx="666.8" cy="9.1" r="9.25" fill="none" stroke="#58b2e3" stroke-width="1.5"/><circle cx="688.6" cy="7.3" r="8.50" fill="none" stroke="#22a0e0" stroke-width="3.0"/><circle cx="733.2" cy="11.8" r="7.50" fill="none" stroke="#80d8d1" stroke-width="6.0"/><circle cx="754.1" cy="8.2" r="9.00" fill="none" stroke="#58b2e3" stroke-width="2.0"/><circle cx="775.0" cy="12.7" r="10.5" fill="#80d8d1"/><circle cx="775.0" cy="12.7" r="1.2" fill="#f2f2f2"/><circle cx="796.8" cy="8.2" r="9.25" fill="none" stroke="#58b2e3" stroke-width="1.5"/><circle cx="604.1" cy="42.7" r="8.75" fill="none" stroke="#f4b4c7" stroke-width="2.5"/><circle cx="604.1" cy="95.5" r="7.50" fill="none" stroke="#f4d23a" stroke-width="6.0"/><circle cx="602.3" cy="117.3" r="9.25" fill="none" stroke="#cfdc9c" stroke-width="1.5"/><circle cx="602.3" cy="180.9" r="9.25" fill="none" stroke="#58b2e3" stroke-width="1.5"/><circle cx="632.3" cy="175.5" r="10.5" fill="#76cbf0"/><circle cx="632.3" cy="175.5" r="1.2" fill="#f2f2f2"/><circle cx="622.3" cy="191.8" r="10.5" fill="#76cbf0"/><circle cx="622.3" cy="191.8" r="1.2" fill="#f2f2f2"/><circle cx="655.0" cy="173.6" r="9.25" fill="none" stroke="#f5b3a8" stroke-width="1.5"/><circle cx="653.2" cy="190.9" r="9.00" fill="none" stroke="#58b2e3" stroke-width="2.0"/><circle cx="675.9" cy="180.0" r="8.50" fill="none" stroke="#f4b4c7" stroke-width="3.0"/><circle cx="714.1" cy="173.6" r="10.5" fill="#f4d23a"/><circle cx="714.1" cy="173.6" r="1.2" fill="#f2f2f2"/><circle cx="697.7" cy="190.0" r="7.50" fill="none" stroke="#80d8d1" stroke-width="6.0"/><circle cx="736.8" cy="183.6" r="10.5" fill="#f4b4c7"/><circle cx="736.8" cy="183.6" r="1.2" fill="#f2f2f2"/><circle cx="720.5" cy="199.1" r="7.50" fill="none" stroke="#f4d23a" stroke-width="6.0"/><circle cx="771.4" cy="170.0" r="10.5" fill="#22a0e0"/><circle cx="771.4" cy="170.0" r="1.2" fill="#f2f2f2"/><circle cx="748.6" cy="171.8" r="9.00" fill="none" stroke="#58b2e3" stroke-width="2.0"/><circle cx="765.9" cy="186.4" r="9.25" fill="none" stroke="#58b2e3" stroke-width="1.5"/><circle cx="789.5" cy="185.5" r="9.25" fill="none" stroke="#58b2e3" stroke-width="1.5"/><circle cx="796.8" cy="171.8" r="9.25" fill="none" stroke="#80d8d1" stroke-width="1.5"/><circle cx="639.5" cy="206.4" r="9.00" fill="none" stroke="#58b2e3" stroke-width="2.0"/><circle cx="667.7" cy="203.6" r="9.25" fill="none" stroke="#f4b4c7" stroke-width="1.5"/><circle cx="749.5" cy="201.8" r="9.25" fill="none" stroke="#58b2e3" stroke-width="1.5"/><circle cx="784.1" cy="206.4" r="9.25" fill="none" stroke="#58b2e3" stroke-width="1.5"/><circle cx="613.2" cy="213.6" r="7.50" fill="none" stroke="#7869c4" stroke-width="5.0"/><circle cx="13.2" cy="212.3" r="10.0" fill="#22a0e0"/><circle cx="13.2" cy="212.3" r="1.2" fill="#f2f2f2"/><circle cx="58.7" cy="216.4" r="21.25" fill="none" stroke="#7869c4" stroke-width="5.5"/><circle cx="142.1" cy="225.5" r="22.00" fill="none" stroke="#80d8d1" stroke-width="3.0"/><circle cx="12.4" cy="241.6" r="10.0" fill="#22a0e0"/><circle cx="12.4" cy="241.6" r="1.2" fill="#f2f2f2"/><circle cx="96.7" cy="251.5" r="20.70" fill="none" stroke="#f4d23a" stroke-width="6.6"/><circle cx="178.5" cy="220.6" r="6.75" fill="none" stroke="#f5b3a8" stroke-width="2.5"/><circle cx="191.7" cy="234.6" r="8.5" fill="#22a0e0"/><circle cx="191.7" cy="234.6" r="1.2" fill="#f2f2f2"/><circle cx="176.0" cy="241.2" r="6.75" fill="none" stroke="#f5b3a8" stroke-width="2.5"/><circle cx="143.5" cy="260.7" r="9.25" fill="none" stroke="#58b2e3" stroke-width="1.5"/><circle cx="164.5" cy="255.3" r="6.75" fill="none" stroke="#f5b3a8" stroke-width="2.5"/><circle cx="183.8" cy="256.1" r="8.5" fill="#22a0e0"/><circle cx="183.8" cy="256.1" r="1.2" fill="#f2f2f2"/><circle cx="37.7" cy="274.6" r="20.80" fill="none" stroke="#7869c4" stroke-width="5.8"/><circle cx="76.4" cy="280.1" r="8.50" fill="none" stroke="#f5b3a8" stroke-width="3.0"/><circle cx="158.7" cy="271.8" r="6.75" fill="none" stroke="#f5b3a8" stroke-width="2.5"/><circle cx="178.0" cy="272.1" r="8.5" fill="#22a0e0"/><circle cx="178.0" cy="272.1" r="1.2" fill="#f2f2f2"/><circle cx="195.9" cy="273.5" r="6.50" fill="none" stroke="#76cbf0" stroke-width="3.0"/><circle cx="114.0" cy="298.3" r="22.50" fill="none" stroke="#80d8d1" stroke-width="3.0"/><circle cx="162.8" cy="288.3" r="8.5" fill="#76cbf0"/><circle cx="162.8" cy="288.3" r="1.2" fill="#f2f2f2"/><circle cx="181.0" cy="289.2" r="8.5" fill="#80d8d1"/><circle cx="181.0" cy="289.2" r="1.2" fill="#f2f2f2"/><circle cx="12.4" cy="301.0" r="10.0" fill="#22a0e0"/><circle cx="12.4" cy="301.0" r="1.2" fill="#f2f2f2"/><circle cx="148.8" cy="303.7" r="6.75" fill="none" stroke="#f5b3a8" stroke-width="2.5"/><circle cx="168.9" cy="303.7" r="8.5" fill="#22a0e0"/><circle cx="168.9" cy="303.7" r="1.2" fill="#f2f2f2"/><circle cx="187.6" cy="304.0" r="6.55" fill="none" stroke="#76cbf0" stroke-width="3.5"/><circle cx="57.9" cy="323.0" r="24.0" fill="#76cbf0"/><circle cx="57.9" cy="323.0" r="3.5" fill="none" stroke="#e3d66c" stroke-width="1"/><circle cx="57.9" cy="323.0" r="7.0" fill="none" stroke="#e3d66c" stroke-width="1"/><circle cx="57.9" cy="323.0" r="10.5" fill="none" stroke="#e3d66c" stroke-width="1"/><circle cx="57.9" cy="323.0" r="14.0" fill="none" stroke="#e3d66c" stroke-width="1"/><circle cx="57.9" cy="323.0" r="17.5" fill="none" stroke="#e3d66c" stroke-width="1"/><circle cx="57.9" cy="323.0" r="21.0" fill="none" stroke="#e3d66c" stroke-width="1"/><circle cx="145.5" cy="320.6" r="6.75" fill="none" stroke="#f5b3a8" stroke-width="2.5"/><circle cx="165.3" cy="320.6" r="8.5" fill="#22a0e0"/><circle cx="165.3" cy="320.6" r="1.2" fill="#f2f2f2"/><circle cx="183.5" cy="320.6" r="8.5" fill="#80d8d1"/><circle cx="183.5" cy="320.6" r="1.2" fill="#f2f2f2"/><circle cx="12.4" cy="329.7" r="10.0" fill="#22a0e0"/><circle cx="12.4" cy="329.7" r="1.2" fill="#f2f2f2"/><circle cx="128.1" cy="331.8" r="8.25" fill="none" stroke="#f5b3a8" stroke-width="2.5"/><circle cx="152.1" cy="336.3" r="8.5" fill="#76cbf0"/><circle cx="152.1" cy="336.3" r="1.2" fill="#f2f2f2"/><circle cx="171.4" cy="336.3" r="6.55" fill="none" stroke="#76cbf0" stroke-width="3.5"/><circle cx="191.4" cy="336.3" r="7.55" fill="none" stroke="#f5b3a8" stroke-width="1.5"/><circle cx="31.1" cy="347.9" r="10.0" fill="#22a0e0"/><circle cx="31.1" cy="347.9" r="1.2" fill="#f2f2f2"/><circle cx="100.0" cy="355.3" r="22.10" fill="none" stroke="#80d8d1" stroke-width="3.0"/><circle cx="139.7" cy="352.0" r="6.75" fill="none" stroke="#f5b3a8" stroke-width="2.5"/><circle cx="159.5" cy="352.0" r="8.5" fill="#80d8d1"/><circle cx="159.5" cy="352.0" r="1.2" fill="#f2f2f2"/><circle cx="176.9" cy="353.6" r="8.5" fill="#80d8d1"/><circle cx="176.9" cy="353.6" r="1.2" fill="#f2f2f2"/><circle cx="195.9" cy="352.8" r="6.55" fill="none" stroke="#f4b4c7" stroke-width="3.5"/><circle cx="12.4" cy="357.3" r="10.0" fill="#22a0e0"/><circle cx="12.4" cy="357.3" r="1.2" fill="#f2f2f2"/><circle cx="146.8" cy="368.2" r="8.5" fill="#22a0e0"/><circle cx="146.8" cy="368.2" r="1.2" fill="#f2f2f2"/><circle cx="164.8" cy="369.8" r="6.55" fill="none" stroke="#76cbf0" stroke-width="3.5"/><circle cx="183.5" cy="369.3" r="7.25" fill="none" stroke="#f5b3a8" stroke-width="1.5"/><circle cx="58.7" cy="387.5" r="18.50" fill="none" stroke="#7869c4" stroke-width="11.0"/><circle cx="12.4" cy="383.4" r="10.0" fill="#22a0e0"/><circle cx="12.4" cy="383.4" r="1.2" fill="#f2f2f2"/><circle cx="102.5" cy="390.5" r="8.5" fill="#22a0e0"/><circle cx="102.5" cy="390.5" r="1.2" fill="#f2f2f2"/><circle cx="126.4" cy="384.0" r="6.75" fill="none" stroke="#f4b4c7" stroke-width="2.5"/><circle cx="149.6" cy="386.7" r="8.5" fill="#80d8d1"/><circle cx="149.6" cy="386.7" r="1.2" fill="#f2f2f2"/><circle cx="170.2" cy="385.0" r="8.5" fill="#80d8d1"/><circle cx="170.2" cy="385.0" r="1.2" fill="#f2f2f2"/><circle cx="190.0" cy="384.2" r="7.25" fill="none" stroke="#58b2e3" stroke-width="1.5"/><circle cx="751.4" cy="282.7" r="44.75" fill="none" stroke="#76cbf0" stroke-width="12.3"/><circle cx="752.3" cy="386.4" r="49.3" fill="none" stroke="#e8d452" stroke-width="1.9"/><circle cx="752.3" cy="386.4" r="47.4" fill="none" stroke="#8fd6cf" stroke-width="0.7" stroke-opacity="0.7"/><circle cx="752.3" cy="386.4" r="42.1" fill="none" stroke="#e8d452" stroke-width="1.9"/><circle cx="752.3" cy="386.4" r="40.2" fill="none" stroke="#8fd6cf" stroke-width="0.7" stroke-opacity="0.7"/><circle cx="752.3" cy="386.4" r="34.9" fill="none" stroke="#e8d452" stroke-width="1.9"/><circle cx="752.3" cy="386.4" r="33.0" fill="none" stroke="#8fd6cf" stroke-width="0.7" stroke-opacity="0.7"/><circle cx="752.3" cy="386.4" r="27.7" fill="none" stroke="#e8d452" stroke-width="1.9"/><circle cx="752.3" cy="386.4" r="25.8" fill="none" stroke="#8fd6cf" stroke-width="0.7" stroke-opacity="0.7"/><circle cx="752.3" cy="386.4" r="20.5" fill="none" stroke="#e8d452" stroke-width="1.9"/><circle cx="752.3" cy="386.4" r="18.6" fill="none" stroke="#8fd6cf" stroke-width="0.7" stroke-opacity="0.7"/><circle cx="752.3" cy="386.4" r="13.3" fill="none" stroke="#e8d452" stroke-width="1.9"/><circle cx="752.3" cy="386.4" r="11.4" fill="none" stroke="#8fd6cf" stroke-width="0.7" stroke-opacity="0.7"/><circle cx="752.3" cy="386.4" r="6.1" fill="none" stroke="#e8d452" stroke-width="1.9"/><circle cx="752.3" cy="386.4" r="4.2" fill="none" stroke="#8fd6cf" stroke-width="0.7" stroke-opacity="0.7"/><circle cx="799.5" cy="319.1" r="8.5" fill="#76cbf0"/><circle cx="799.5" cy="319.1" r="1.2" fill="#f2f2f2"/><circle cx="790.5" cy="336.4" r="9.00" fill="none" stroke="#f5b3a8" stroke-width="2.0"/><circle cx="692.3" cy="215.5" r="9.00" fill="none" stroke="#cfdc9c" stroke-width="2.0"/><circle cx="606.8" cy="233.6" r="8.00" fill="none" stroke="#76cbf0" stroke-width="4.0"/><circle cx="630.5" cy="227.3" r="9.40" fill="none" stroke="#f4b4c7" stroke-width="1.2"/><circle cx="654.1" cy="222.7" r="9.40" fill="none" stroke="#f4b4c7" stroke-width="1.2"/><circle cx="676.8" cy="231.8" r="9.00" fill="none" stroke="#58b2e3" stroke-width="2.0"/><circle cx="715.4" cy="225.5" r="10.5" fill="#22a0e0"/><circle cx="715.4" cy="225.5" r="1.2" fill="#f2f2f2"/><circle cx="736.8" cy="220.0" r="9.25" fill="none" stroke="#58b2e3" stroke-width="1.5"/><circle cx="769.5" cy="221.8" r="9.25" fill="none" stroke="#58b2e3" stroke-width="1.5"/><circle cx="793.2" cy="234.5" r="9.25" fill="none" stroke="#c6ccd6" stroke-width="1.5"/><circle cx="700.5" cy="241.8" r="7.50" fill="none" stroke="#f4b4c7" stroke-width="5.0"/><circle cx="623.2" cy="247.3" r="9.25" fill="none" stroke="#c6ccd6" stroke-width="1.5"/><circle cx="653.2" cy="243.6" r="9.25" fill="none" stroke="#c6ccd6" stroke-width="1.5"/><circle cx="640.5" cy="261.8" r="9.25" fill="none" stroke="#f5b3a8" stroke-width="1.5"/><circle cx="671.4" cy="257.3" r="10.5" fill="#76cbf0"/><circle cx="671.4" cy="257.3" r="1.2" fill="#f2f2f2"/><circle cx="617.7" cy="269.1" r="10.5" fill="#f4d23a"/><circle cx="617.7" cy="269.1" r="1.2" fill="#f2f2f2"/><circle cx="657.7" cy="275.5" r="10.5" fill="#76cbf0"/><circle cx="657.7" cy="275.5" r="1.2" fill="#f2f2f2"/><circle cx="687.7" cy="270.9" r="9.00" fill="none" stroke="#58b2e3" stroke-width="2.0"/><circle cx="634.1" cy="282.7" r="8.50" fill="none" stroke="#f4b4c7" stroke-width="3.0"/><circle cx="605.0" cy="287.3" r="10.5" fill="#f4d23a"/><circle cx="605.0" cy="287.3" r="1.2" fill="#f2f2f2"/><circle cx="665.0" cy="296.4" r="7.50" fill="none" stroke="#f4b4c7" stroke-width="6.0"/><circle cx="687.7" cy="297.3" r="9.00" fill="none" stroke="#58b2e3" stroke-width="2.0"/><circle cx="611.4" cy="308.2" r="8.75" fill="none" stroke="#76cbf0" stroke-width="2.5"/><circle cx="641.4" cy="303.6" r="7.25" fill="none" stroke="#f4d23a" stroke-width="6.5"/><circle cx="628.6" cy="320.9" r="9.00" fill="none" stroke="#58b2e3" stroke-width="2.0"/><circle cx="659.5" cy="317.3" r="7.50" fill="none" stroke="#f4b4c7" stroke-width="6.0"/><circle cx="683.2" cy="319.1" r="9.25" fill="none" stroke="#c6ccd6" stroke-width="1.5"/><circle cx="703.2" cy="318.2" r="6.50" fill="none" stroke="#f4b4c7" stroke-width="3.0"/><circle cx="600.5" cy="325.5" r="8.50" fill="none" stroke="#f4b4c7" stroke-width="3.0"/><circle cx="615.9" cy="339.1" r="9.00" fill="none" stroke="#58b2e3" stroke-width="2.0"/><circle cx="645.9" cy="334.5" r="7.50" fill="none" stroke="#f4b4c7" stroke-width="6.0"/><circle cx="670.5" cy="336.4" r="9.25" fill="none" stroke="#80d8d1" stroke-width="1.5"/><circle cx="703.2" cy="338.2" r="9.25" fill="none" stroke="#f4b4c7" stroke-width="1.5"/><circle cx="632.3" cy="351.8" r="7.50" fill="none" stroke="#f4b4c7" stroke-width="6.0"/><circle cx="657.7" cy="354.5" r="9.25" fill="none" stroke="#c6ccd6" stroke-width="1.5"/><circle cx="691.4" cy="357.3" r="9.00" fill="none" stroke="#f4b4c7" stroke-width="2.0"/><circle cx="611.4" cy="361.8" r="9.00" fill="none" stroke="#58b2e3" stroke-width="2.0"/><circle cx="646.8" cy="373.6" r="9.25" fill="none" stroke="#c6ccd6" stroke-width="1.5"/><circle cx="679.5" cy="375.5" r="8.75" fill="none" stroke="#f5b3a8" stroke-width="2.5"/><circle cx="619.5" cy="382.7" r="7.50" fill="none" stroke="#f4b4c7" stroke-width="5.0"/><circle cx="659.5" cy="435.5" r="47.15" fill="none" stroke="#f3ab58" stroke-width="4.5"/><circle cx="659.5" cy="435.5" r="50.50" fill="none" stroke="#80d8d1" stroke-width="1.8"/><circle cx="750.5" cy="491.8" r="40.70" fill="none" stroke="#f4b4c7" stroke-width="21.0"/><circle cx="750.5" cy="491.8" r="30.00" fill="none" stroke="#80d8d1" stroke-width="1.2"/><circle cx="650.5" cy="553.6" r="44.85" fill="none" stroke="#22a0e0" stroke-width="12.5"/><circle cx="650.5" cy="553.6" r="38.40" fill="none" stroke="#f4d23a" stroke-width="0.8"/><circle cx="751.4" cy="599.1" r="49.50" fill="none" stroke="#f4b4c7" stroke-width="3.0"/><circle cx="751.4" cy="599.1" r="47.70" fill="none" stroke="#80d8d1" stroke-width="1.0"/><circle cx="720.5" cy="438.7" r="8.5" fill="#76cbf0"/><circle cx="720.5" cy="438.7" r="1.2" fill="#f2f2f2"/><circle cx="787.4" cy="440.9" r="8.75" fill="none" stroke="#f5b3a8" stroke-width="2.5"/><circle cx="798.6" cy="456.4" r="7.40" fill="none" stroke="#cfdc9c" stroke-width="1.2"/><circle cx="714.1" cy="545.5" r="7.25" fill="none" stroke="#f4d23a" stroke-width="6.5"/><circle cx="788.6" cy="541.8" r="7.75" fill="none" stroke="#76cbf0" stroke-width="4.5"/><circle cx="798.6" cy="560.0" r="7.40" fill="none" stroke="#cfdc9c" stroke-width="1.2"/><circle cx="611.4" cy="480.5" r="9.00" fill="none" stroke="#f5b3a8" stroke-width="2.0"/><circle cx="602.3" cy="500.0" r="9.00" fill="none" stroke="#f5b3a8" stroke-width="2.0"/><circle cx="634.1" cy="493.6" r="9.00" fill="none" stroke="#f5b3a8" stroke-width="2.0"/><circle cx="679.5" cy="497.3" r="9.00" fill="none" stroke="#f5b3a8" stroke-width="2.0"/><circle cx="656.8" cy="673.6" r="39.45" fill="none" stroke="#f4d23a" stroke-width="22.5"/><circle cx="754.1" cy="712.7" r="48.95" fill="none" stroke="#76cbf0" stroke-width="4.5"/><circle cx="754.1" cy="712.7" r="46.40" fill="none" stroke="#f4d23a" stroke-width="0.8"/><circle cx="615.4" cy="602.7" r="8.5" fill="#f4b4c7"/><circle cx="615.4" cy="602.7" r="1.2" fill="#f2f2f2"/><circle cx="631.4" cy="615.5" r="9.00" fill="none" stroke="#7869c4" stroke-width="2.0"/><circle cx="665.5" cy="612.7" r="8.5" fill="#80d8d1"/><circle cx="665.5" cy="612.7" r="1.2" fill="#f2f2f2"/><circle cx="687.4" cy="601.8" r="8.5" fill="#80d8d1"/><circle cx="687.4" cy="601.8" r="1.2" fill="#f2f2f2"/><circle cx="693.2" cy="620.9" r="8.00" fill="none" stroke="#76cbf0" stroke-width="4.0"/><circle cx="705.5" cy="637.3" r="8.5" fill="#f4b4c7"/><circle cx="705.5" cy="637.3" r="1.2" fill="#f2f2f2"/><circle cx="718.3" cy="653.6" r="9.00" fill="none" stroke="#cfdc9c" stroke-width="2.0"/><circle cx="613.2" cy="627.6" r="7.75" fill="none" stroke="#76cbf0" stroke-width="4.5"/><circle cx="797.2" cy="644.5" r="7.25" fill="none" stroke="#c6ccd6" stroke-width="1.5"/><circle cx="781.9" cy="656.0" r="7.75" fill="none" stroke="#76cbf0" stroke-width="4.5"/><circle cx="796.5" cy="669.1" r="7.25" fill="none" stroke="#c6ccd6" stroke-width="1.5"/><circle cx="620.5" cy="725.5" r="7.75" fill="none" stroke="#76cbf0" stroke-width="4.5"/><circle cx="639.5" cy="731.8" r="7.00" fill="none" stroke="#f5b3a8" stroke-width="2.0"/><circle cx="693.2" cy="724.5" r="9.25" fill="none" stroke="#58b2e3" stroke-width="1.5"/><circle cx="614.1" cy="746.4" r="7.75" fill="none" stroke="#76cbf0" stroke-width="4.5"/><circle cx="606.8" cy="770.9" r="7.25" fill="none" stroke="#c6ccd6" stroke-width="1.5"/><circle cx="726.8" cy="770.0" r="8.00" fill="none" stroke="#f4d23a" stroke-width="4.0"/><circle cx="746.8" cy="784.5" r="8.00" fill="none" stroke="#f4d23a" stroke-width="4.0"/><circle cx="768.6" cy="777.0" r="8.00" fill="none" stroke="#f4d23a" stroke-width="4.0"/><circle cx="790.5" cy="768.2" r="8.00" fill="none" stroke="#f4d23a" stroke-width="4.0"/><circle cx="665.9" cy="786.4" r="39.70" fill="none" stroke="#f4b4c7" stroke-width="22.0"/><circle cx="755.9" cy="847.3" r="39.20" fill="none" stroke="#22a0e0" stroke-width="22.0"/><circle cx="662.3" cy="899.1" r="49.20" fill="none" stroke="#f4b4c7" stroke-width="3.0"/><circle cx="662.3" cy="899.1" r="47.00" fill="none" stroke="#f4d23a" stroke-width="1.0"/><circle cx="756.2" cy="951.4" r="41.75" fill="none" stroke="#22a0e0" stroke-width="20.5"/><circle cx="725.9" cy="791.8" r="7.40" fill="none" stroke="#c6ccd6" stroke-width="1.2"/><circle cx="785.9" cy="790.9" r="8.00" fill="none" stroke="#f4d23a" stroke-width="4.0"/><circle cx="605.0" cy="820.9" r="8.00" fill="none" stroke="#f4d23a" stroke-width="4.0"/><circle cx="622.3" cy="828.2" r="8.5" fill="#f4d23a"/><circle cx="622.3" cy="828.2" r="1.2" fill="#f2f2f2"/><circle cx="625.0" cy="848.2" r="8.00" fill="none" stroke="#f4d23a" stroke-width="4.0"/><circle cx="604.1" cy="856.4" r="8.00" fill="none" stroke="#f4d23a" stroke-width="4.0"/><circle cx="598.6" cy="877.3" r="8.00" fill="none" stroke="#f4d23a" stroke-width="4.0"/><circle cx="694.6" cy="847.3" r="7.40" fill="none" stroke="#c6ccd6" stroke-width="1.2"/><circle cx="723.2" cy="900.0" r="8.5" fill="#f4d23a"/><circle cx="723.2" cy="900.0" r="1.2" fill="#f2f2f2"/><circle cx="790.5" cy="899.1" r="10.5" fill="#76cbf0"/><circle cx="790.5" cy="899.1" r="1.2" fill="#f2f2f2"/><circle cx="613.2" cy="950.0" r="10.5" fill="#76cbf0"/><circle cx="613.2" cy="950.0" r="1.2" fill="#f2f2f2"/><circle cx="688.6" cy="955.5" r="9.00" fill="none" stroke="#cfdc9c" stroke-width="2.0"/><circle cx="649.5" cy="959.1" r="9.25" fill="none" stroke="#80d8d1" stroke-width="1.5"/><circle cx="628.6" cy="965.5" r="9.25" fill="none" stroke="#80d8d1" stroke-width="1.5"/><circle cx="674.1" cy="972.0" r="9.25" fill="none" stroke="#80d8d1" stroke-width="1.5"/><circle cx="695.7" cy="978.1" r="10.5" fill="#76cbf0"/><circle cx="695.7" cy="978.1" r="1.2" fill="#f2f2f2"/><circle cx="611.8" cy="989.4" r="8.75" fill="none" stroke="#f4b4c7" stroke-width="2.5"/><circle cx="641.7" cy="998.4" r="9.25" fill="none" stroke="#80d8d1" stroke-width="1.5"/><circle cx="663.9" cy="992.4" r="9.25" fill="none" stroke="#80d8d1" stroke-width="1.5"/><circle cx="698.1" cy="1000.2" r="9.25" fill="none" stroke="#80d8d1" stroke-width="1.5"/><circle cx="718.4" cy="1002.0" r="6.25" fill="none" stroke="#22a0e0" stroke-width="4.5"/><circle cx="797.5" cy="999.0" r="9.25" fill="none" stroke="#58b2e3" stroke-width="1.5"/><circle cx="13.2" cy="414.7" r="10.0" fill="#22a0e0"/><circle cx="13.2" cy="414.7" r="1.2" fill="#f2f2f2"/><circle cx="37.2" cy="442.8" r="20.50" fill="none" stroke="#f4b4c7" stroke-width="7.0"/><circle cx="87.9" cy="430.4" r="18.10" fill="none" stroke="#22a0e0" stroke-width="12.0"/><circle cx="132.2" cy="398.5" r="8.5" fill="#76cbf0"/><circle cx="132.2" cy="398.5" r="1.2" fill="#f2f2f2"/><circle cx="152.9" cy="407.8" r="6.55" fill="none" stroke="#76cbf0" stroke-width="3.5"/><circle cx="176.9" cy="401.5" r="7.25" fill="none" stroke="#c6ccd6" stroke-width="1.5"/><circle cx="194.2" cy="401.5" r="6.80" fill="none" stroke="#f4b4c7" stroke-width="3.0"/><circle cx="128.1" cy="415.5" r="8.5" fill="#76cbf0"/><circle cx="128.1" cy="415.5" r="1.2" fill="#f2f2f2"/><circle cx="147.9" cy="425.5" r="6.30" fill="none" stroke="#76cbf0" stroke-width="4.0"/><circle cx="173.6" cy="418.0" r="8.5" fill="#f4d23a"/><circle cx="173.6" cy="418.0" r="1.2" fill="#f2f2f2"/><circle cx="191.7" cy="418.8" r="6.80" fill="none" stroke="#f4b4c7" stroke-width="3.0"/><circle cx="124.8" cy="432.9" r="8.5" fill="#76cbf0"/><circle cx="124.8" cy="432.9" r="1.2" fill="#f2f2f2"/><circle cx="133.9" cy="446.1" r="8.0" fill="none" stroke="#7869c4" stroke-width="1.0"/><circle cx="133.9" cy="446.1" r="5.0" fill="none" stroke="#7869c4" stroke-width="1.0"/><circle cx="151.2" cy="445.3" r="8.5" fill="#80d8d1"/><circle cx="151.2" cy="445.3" r="1.2" fill="#f2f2f2"/><circle cx="169.4" cy="434.5" r="8.5" fill="#f4d23a"/><circle cx="169.4" cy="434.5" r="1.2" fill="#f2f2f2"/><circle cx="186.8" cy="436.2" r="6.80" fill="none" stroke="#f4b4c7" stroke-width="3.0"/><circle cx="175.2" cy="450.2" r="6.55" fill="none" stroke="#f4b4c7" stroke-width="3.5"/><circle cx="198.3" cy="454.4" r="8.5" fill="#76cbf0"/><circle cx="198.3" cy="454.4" r="1.2" fill="#f2f2f2"/><circle cx="12.9" cy="470.6" r="10.0" fill="#22a0e0"/><circle cx="12.9" cy="470.6" r="1.2" fill="#f2f2f2"/><circle cx="71.9" cy="489.1" r="22.25" fill="none" stroke="#80d8d1" stroke-width="3.5"/><circle cx="116.5" cy="457.7" r="8.5" fill="#76cbf0"/><circle cx="116.5" cy="457.7" r="1.2" fill="#f2f2f2"/><circle cx="140.5" cy="461.8" r="6.55" fill="none" stroke="#76cbf0" stroke-width="3.5"/><circle cx="164.5" cy="466.8" r="7.25" fill="none" stroke="#58b2e3" stroke-width="1.5"/><circle cx="188.4" cy="470.9" r="7.25" fill="none" stroke="#80d8d1" stroke-width="1.5"/><circle cx="105.5" cy="475.0" r="6.50" fill="none" stroke="#f4b4c7" stroke-width="3.0"/><circle cx="130.6" cy="479.2" r="8.5" fill="#80d8d1"/><circle cx="130.6" cy="479.2" r="1.2" fill="#f2f2f2"/><circle cx="154.5" cy="483.3" r="8.5" fill="#f4d23a"/><circle cx="154.5" cy="483.3" r="1.2" fill="#f2f2f2"/><circle cx="178.5" cy="487.4" r="8.0" fill="none" stroke="#7869c4" stroke-width="1.0"/><circle cx="178.5" cy="487.4" r="5.0" fill="none" stroke="#7869c4" stroke-width="1.0"/><circle cx="28.1" cy="485.5" r="10.0" fill="#22a0e0"/><circle cx="28.1" cy="485.5" r="1.2" fill="#f2f2f2"/><circle cx="112.1" cy="495.4" r="8.5" fill="#76cbf0"/><circle cx="112.1" cy="495.4" r="1.2" fill="#f2f2f2"/><circle cx="135.5" cy="498.7" r="6.55" fill="none" stroke="#76cbf0" stroke-width="3.5"/><circle cx="160.3" cy="502.3" r="7.55" fill="none" stroke="#58b2e3" stroke-width="1.5"/><circle cx="183.5" cy="506.4" r="8.5" fill="#7869c4"/><circle cx="183.5" cy="506.4" r="1.2" fill="#f2f2f2"/><circle cx="26.1" cy="523.0" r="17.60" fill="none" stroke="#76cbf0" stroke-width="11.8"/><circle cx="100.8" cy="512.2" r="6.50" fill="none" stroke="#f4b4c7" stroke-width="3.0"/><circle cx="125.3" cy="516.4" r="8.5" fill="#80d8d1"/><circle cx="125.3" cy="516.4" r="1.2" fill="#f2f2f2"/><circle cx="149.1" cy="519.7" r="8.5" fill="#f4d23a"/><circle cx="149.1" cy="519.7" r="1.2" fill="#f2f2f2"/><circle cx="173.6" cy="522.1" r="8.0" fill="none" stroke="#7869c4" stroke-width="1.0"/><circle cx="173.6" cy="522.1" r="5.0" fill="none" stroke="#7869c4" stroke-width="1.0"/><circle cx="195.0" cy="525.5" r="7.25" fill="none" stroke="#c6ccd6" stroke-width="1.5"/><circle cx="72.4" cy="546.9" r="17.95" fill="none" stroke="#22a0e0" stroke-width="12.5"/><circle cx="114.0" cy="533.7" r="5.80" fill="none" stroke="#76cbf0" stroke-width="5.0"/><circle cx="139.2" cy="536.2" r="7.25" fill="none" stroke="#58b2e3" stroke-width="1.5"/><circle cx="162.8" cy="539.5" r="5.55" fill="none" stroke="#76cbf0" stroke-width="5.5"/><circle cx="186.8" cy="542.8" r="6.30" fill="none" stroke="#f4d23a" stroke-width="4.0"/><circle cx="112.4" cy="552.7" r="6.30" fill="none" stroke="#76cbf0" stroke-width="4.0"/><circle cx="136.9" cy="554.4" r="7.25" fill="none" stroke="#58b2e3" stroke-width="1.5"/><circle cx="160.7" cy="556.9" r="5.80" fill="none" stroke="#76cbf0" stroke-width="5.0"/><circle cx="185.1" cy="559.3" r="6.30" fill="none" stroke="#f4d23a" stroke-width="4.0"/><circle cx="16.2" cy="556.5" r="10.0" fill="#22a0e0"/><circle cx="16.2" cy="556.5" r="2.5" fill="#e2e2e2"/><circle cx="102.1" cy="570.1" r="8.5" fill="#7869c4"/><circle cx="102.1" cy="570.1" r="1.2" fill="#f2f2f2"/><circle cx="126.0" cy="571.7" r="6.55" fill="none" stroke="#76cbf0" stroke-width="3.5"/><circle cx="149.6" cy="573.4" r="7.25" fill="none" stroke="#cfdc9c" stroke-width="1.5"/><circle cx="174.4" cy="576.0" r="8.5" fill="#7869c4"/><circle cx="174.4" cy="576.0" r="1.2" fill="#f2f2f2"/><circle cx="13.2" cy="575.0" r="10.0" fill="#22a0e0"/><circle cx="13.2" cy="575.0" r="1.2" fill="#f2f2f2"/><circle cx="33.0" cy="573.4" r="10.0" fill="#22a0e0"/><circle cx="33.0" cy="573.4" r="1.2" fill="#f2f2f2"/><circle cx="57.0" cy="605.5" r="22.10" fill="none" stroke="#58b2e3" stroke-width="3.0"/><circle cx="91.4" cy="587.4" r="6.50" fill="none" stroke="#f4b4c7" stroke-width="3.0"/><circle cx="116.5" cy="589.5" r="8.5" fill="#80d8d1"/><circle cx="116.5" cy="589.5" r="1.2" fill="#f2f2f2"/><circle cx="139.7" cy="591.5" r="7.25" fill="none" stroke="#cfdc9c" stroke-width="1.5"/><circle cx="164.5" cy="593.1" r="8.0" fill="none" stroke="#7869c4" stroke-width="1.0"/><circle cx="164.5" cy="593.1" r="5.0" fill="none" stroke="#7869c4" stroke-width="1.0"/><circle cx="188.4" cy="594.8" r="7.25" fill="none" stroke="#76cbf0" stroke-width="1.5"/><circle cx="12.9" cy="604.7" r="10.0" fill="#22a0e0"/><circle cx="12.9" cy="604.7" r="1.2" fill="#f2f2f2"/><circle cx="106.3" cy="607.2" r="5.80" fill="none" stroke="#76cbf0" stroke-width="5.0"/><circle cx="130.6" cy="609.7" r="7.25" fill="none" stroke="#58b2e3" stroke-width="1.5"/><circle cx="155.4" cy="610.5" r="8.5" fill="#22a0e0"/><circle cx="155.4" cy="610.5" r="2.0" fill="#e2e2e2"/><circle cx="179.3" cy="612.1" r="6.30" fill="none" stroke="#f4d23a" stroke-width="4.0"/><circle cx="12.9" cy="630.8" r="10.0" fill="#22a0e0"/><circle cx="12.9" cy="630.8" r="1.2" fill="#f2f2f2"/><circle cx="34.4" cy="632.8" r="6.55" fill="none" stroke="#80d8d1" stroke-width="7.5"/><circle cx="98.8" cy="626.2" r="8.5" fill="#7869c4"/><circle cx="98.8" cy="626.2" r="1.2" fill="#f2f2f2"/><circle cx="122.3" cy="627.0" r="6.30" fill="none" stroke="#76cbf0" stroke-width="4.0"/><circle cx="147.1" cy="628.7" r="7.25" fill="none" stroke="#cfdc9c" stroke-width="1.5"/><circle cx="171.1" cy="628.7" r="7.25" fill="none" stroke="#f4b4c7" stroke-width="1.5"/><circle cx="195.0" cy="630.3" r="7.25" fill="none" stroke="#76cbf0" stroke-width="1.5"/><circle cx="57.9" cy="664.2" r="22.30" fill="none" stroke="#58b2e3" stroke-width="3.0"/><circle cx="90.1" cy="645.2" r="6.50" fill="none" stroke="#f4b4c7" stroke-width="3.0"/><circle cx="114.9" cy="645.7" r="8.5" fill="#80d8d1"/><circle cx="114.9" cy="645.7" r="1.2" fill="#f2f2f2"/><circle cx="139.7" cy="646.0" r="8.5" fill="#22a0e0"/><circle cx="139.7" cy="646.0" r="2.0" fill="#e2e2e2"/><circle cx="163.6" cy="646.9" r="8.0" fill="none" stroke="#7869c4" stroke-width="1.0"/><circle cx="163.6" cy="646.9" r="5.0" fill="none" stroke="#7869c4" stroke-width="1.0"/><circle cx="187.6" cy="647.7" r="7.00" fill="none" stroke="#76cbf0" stroke-width="2.0"/><circle cx="12.4" cy="656.0" r="10.0" fill="#22a0e0"/><circle cx="12.4" cy="656.0" r="1.2" fill="#f2f2f2"/><circle cx="98.8" cy="664.2" r="8.5" fill="#7869c4"/><circle cx="98.8" cy="664.2" r="1.2" fill="#f2f2f2"/><circle cx="122.3" cy="664.2" r="6.05" fill="none" stroke="#76cbf0" stroke-width="4.5"/><circle cx="147.1" cy="664.5" r="7.25" fill="none" stroke="#cfdc9c" stroke-width="1.5"/><circle cx="171.1" cy="664.5" r="7.25" fill="none" stroke="#f4b4c7" stroke-width="1.5"/><circle cx="194.2" cy="665.0" r="7.25" fill="none" stroke="#58b2e3" stroke-width="1.5"/><circle cx="12.9" cy="682.1" r="10.0" fill="#22a0e0"/><circle cx="12.9" cy="682.1" r="1.2" fill="#f2f2f2"/><circle cx="90.1" cy="683.2" r="7.25" fill="none" stroke="#58b2e3" stroke-width="1.5"/><circle cx="114.9" cy="683.2" r="8.5" fill="#80d8d1"/><circle cx="114.9" cy="683.2" r="1.2" fill="#f2f2f2"/><circle cx="138.8" cy="683.2" r="7.25" fill="none" stroke="#f5b3a8" stroke-width="1.5"/><circle cx="163.3" cy="682.4" r="8.0" fill="none" stroke="#7869c4" stroke-width="1.0"/><circle cx="163.3" cy="682.4" r="5.0" fill="none" stroke="#7869c4" stroke-width="1.0"/><circle cx="187.6" cy="682.4" r="7.25" fill="none" stroke="#cfdc9c" stroke-width="1.5"/><circle cx="106.6" cy="701.4" r="5.80" fill="none" stroke="#76cbf0" stroke-width="5.0"/><circle cx="130.6" cy="701.4" r="7.25" fill="none" stroke="#58b2e3" stroke-width="1.5"/><circle cx="155.4" cy="700.6" r="5.80" fill="none" stroke="#f4b4c7" stroke-width="5.0"/><circle cx="179.3" cy="699.8" r="5.30" fill="none" stroke="#22a0e0" stroke-width="6.0"/><circle cx="12.4" cy="706.9" r="10.0" fill="#22a0e0"/><circle cx="12.4" cy="706.9" r="1.2" fill="#f2f2f2"/><circle cx="57.9" cy="722.1" r="22.30" fill="none" stroke="#58b2e3" stroke-width="3.0"/><circle cx="98.8" cy="720.7" r="8.5" fill="#7869c4"/><circle cx="98.8" cy="720.7" r="1.2" fill="#f2f2f2"/><circle cx="122.3" cy="720.4" r="6.30" fill="none" stroke="#76cbf0" stroke-width="4.0"/><circle cx="147.1" cy="719.6" r="7.25" fill="none" stroke="#cfdc9c" stroke-width="1.5"/><circle cx="171.1" cy="717.9" r="7.25" fill="none" stroke="#f4b4c7" stroke-width="1.5"/><circle cx="194.2" cy="717.1" r="6.30" fill="none" stroke="#76cbf0" stroke-width="4.0"/><circle cx="12.4" cy="733.6" r="10.0" fill="#22a0e0"/><circle cx="12.4" cy="733.6" r="1.2" fill="#f2f2f2"/><circle cx="90.1" cy="739.4" r="7.25" fill="none" stroke="#58b2e3" stroke-width="1.5"/><circle cx="114.9" cy="738.6" r="8.5" fill="#80d8d1"/><circle cx="114.9" cy="738.6" r="1.2" fill="#f2f2f2"/><circle cx="138.0" cy="737.8" r="7.00" fill="none" stroke="#f5b3a8" stroke-width="2.0"/><circle cx="163.6" cy="736.1" r="8.5" fill="#f4b4c7"/><circle cx="163.6" cy="736.1" r="1.2" fill="#f2f2f2"/><circle cx="187.6" cy="734.5" r="7.25" fill="none" stroke="#cfdc9c" stroke-width="1.5"/><circle cx="12.4" cy="758.4" r="10.0" fill="#22a0e0"/><circle cx="12.4" cy="758.4" r="1.2" fill="#f2f2f2"/><circle cx="31.9" cy="752.6" r="10.0" fill="#22a0e0"/><circle cx="31.9" cy="752.6" r="1.2" fill="#f2f2f2"/><circle cx="99.2" cy="758.4" r="8.5" fill="#7869c4"/><circle cx="99.2" cy="758.4" r="1.2" fill="#f2f2f2"/><circle cx="123.1" cy="756.8" r="7.25" fill="none" stroke="#f4b4c7" stroke-width="1.5"/><circle cx="147.9" cy="755.1" r="7.25" fill="none" stroke="#cfdc9c" stroke-width="1.5"/><circle cx="171.9" cy="753.5" r="6.30" fill="none" stroke="#f4d23a" stroke-width="4.0"/><circle cx="195.0" cy="750.2" r="6.30" fill="none" stroke="#76cbf0" stroke-width="4.0"/><circle cx="11.9" cy="781.2" r="10.0" fill="#22a0e0"/><circle cx="11.9" cy="781.2" r="1.2" fill="#f2f2f2"/><circle cx="32.7" cy="779.0" r="10.0" fill="#22a0e0"/><circle cx="32.7" cy="779.0" r="1.2" fill="#f2f2f2"/><circle cx="69.4" cy="781.5" r="21.95" fill="none" stroke="#f4d23a" stroke-width="3.5"/><circle cx="109.9" cy="776.5" r="6.30" fill="none" stroke="#76cbf0" stroke-width="4.0"/><circle cx="134.2" cy="774.5" r="7.25" fill="none" stroke="#58b2e3" stroke-width="1.5"/><circle cx="158.3" cy="771.9" r="6.55" fill="none" stroke="#7869c4" stroke-width="3.5"/><circle cx="182.6" cy="769.9" r="7.25" fill="none" stroke="#cfdc9c" stroke-width="1.5"/><circle cx="103.8" cy="795.5" r="6.05" fill="none" stroke="#76cbf0" stroke-width="4.5"/><circle cx="127.6" cy="792.2" r="7.25" fill="none" stroke="#7869c4" stroke-width="1.5"/><circle cx="152.1" cy="790.6" r="7.25" fill="none" stroke="#cfdc9c" stroke-width="1.5"/><circle cx="176.5" cy="787.8" r="6.30" fill="none" stroke="#f4d23a" stroke-width="4.0"/><circle cx="34.7" cy="822.8" r="20.60" fill="none" stroke="#80d8d1" stroke-width="8.0"/><circle cx="69.8" cy="815.9" r="10.0" fill="#22a0e0"/><circle cx="69.8" cy="815.9" r="1.2" fill="#f2f2f2"/><circle cx="98.7" cy="815.4" r="7.25" fill="none" stroke="#58b2e3" stroke-width="1.5"/><circle cx="122.6" cy="812.6" r="8.5" fill="#f4d23a"/><circle cx="122.6" cy="812.6" r="1.2" fill="#f2f2f2"/><circle cx="146.8" cy="809.6" r="7.25" fill="none" stroke="#f5b3a8" stroke-width="1.5"/><circle cx="171.1" cy="807.1" r="8.5" fill="#f4b4c7"/><circle cx="171.1" cy="807.1" r="1.2" fill="#f2f2f2"/><circle cx="194.2" cy="803.8" r="7.25" fill="none" stroke="#cfdc9c" stroke-width="1.5"/><circle cx="100.8" cy="833.6" r="7.00" fill="none" stroke="#58b2e3" stroke-width="2.0"/><circle cx="125.1" cy="831.1" r="8.5" fill="#f4d23a"/><circle cx="125.1" cy="831.1" r="1.2" fill="#f2f2f2"/><circle cx="148.8" cy="827.8" r="7.25" fill="none" stroke="#f5b3a8" stroke-width="1.5"/><circle cx="173.2" cy="824.5" r="8.5" fill="#f4b4c7"/><circle cx="173.2" cy="824.5" r="1.2" fill="#f2f2f2"/><circle cx="195.9" cy="822.0" r="7.25" fill="none" stroke="#cfdc9c" stroke-width="1.5"/><circle cx="13.6" cy="851.2" r="10.0" fill="#22a0e0"/><circle cx="13.6" cy="851.2" r="1.2" fill="#f2f2f2"/><circle cx="71.4" cy="857.2" r="18.00" fill="none" stroke="#f4d23a" stroke-width="12.0"/><circle cx="119.3" cy="850.6" r="8.5" fill="#f3ab58"/><circle cx="119.3" cy="850.6" r="1.2" fill="#f2f2f2"/><circle cx="143.5" cy="847.3" r="8.5" fill="#76cbf0"/><circle cx="143.5" cy="847.3" r="1.2" fill="#f2f2f2"/><circle cx="167.3" cy="843.5" r="6.30" fill="none" stroke="#7869c4" stroke-width="4.0"/><circle cx="191.4" cy="839.7" r="7.00" fill="none" stroke="#58b2e3" stroke-width="2.0"/><circle cx="12.4" cy="873.2" r="10.0" fill="#22a0e0"/><circle cx="12.4" cy="873.2" r="1.2" fill="#f2f2f2"/><circle cx="33.1" cy="871.1" r="10.0" fill="#22a0e0"/><circle cx="33.1" cy="871.1" r="1.2" fill="#f2f2f2"/><circle cx="114.0" cy="870.4" r="6.55" fill="none" stroke="#7869c4" stroke-width="3.5"/><circle cx="137.2" cy="866.6" r="8.0" fill="none" stroke="#7869c4" stroke-width="1.0"/><circle cx="137.2" cy="866.6" r="5.0" fill="none" stroke="#7869c4" stroke-width="1.0"/><circle cx="161.7" cy="862.5" r="7.25" fill="none" stroke="#cfdc9c" stroke-width="1.5"/><circle cx="185.5" cy="858.8" r="6.30" fill="none" stroke="#f4d23a" stroke-width="4.0"/><circle cx="28.9" cy="905.8" r="18.10" fill="none" stroke="#f4b4c7" stroke-width="12.0"/><circle cx="79.3" cy="916.2" r="17.90" fill="none" stroke="#f4d23a" stroke-width="12.6"/><circle cx="107.1" cy="890.9" r="7.25" fill="none" stroke="#58b2e3" stroke-width="1.5"/><circle cx="132.2" cy="886.4" r="8.5" fill="#f4d23a"/><circle cx="132.2" cy="886.4" r="1.2" fill="#f2f2f2"/><circle cx="155.7" cy="882.3" r="7.25" fill="none" stroke="#cfdc9c" stroke-width="1.5"/><circle cx="180.2" cy="877.7" r="8.5" fill="#f4b4c7"/><circle cx="180.2" cy="877.7" r="1.2" fill="#f2f2f2"/><circle cx="126.9" cy="906.8" r="6.30" fill="none" stroke="#7869c4" stroke-width="4.0"/><circle cx="150.7" cy="901.8" r="8.5" fill="#80d8d1"/><circle cx="150.7" cy="901.8" r="1.2" fill="#f2f2f2"/><circle cx="174.4" cy="897.2" r="6.55" fill="none" stroke="#7869c4" stroke-width="3.5"/><circle cx="196.7" cy="892.2" r="7.25" fill="none" stroke="#58b2e3" stroke-width="1.5"/><circle cx="123.6" cy="925.6" r="6.55" fill="none" stroke="#7869c4" stroke-width="3.5"/><circle cx="147.4" cy="920.3" r="8.0" fill="none" stroke="#f4b4c7" stroke-width="1.0"/><circle cx="147.4" cy="920.3" r="5.0" fill="none" stroke="#f4b4c7" stroke-width="1.0"/><circle cx="171.1" cy="916.2" r="7.25" fill="none" stroke="#cfdc9c" stroke-width="1.5"/><circle cx="193.7" cy="910.7" r="6.30" fill="none" stroke="#f4d23a" stroke-width="4.0"/><circle cx="12.4" cy="942.1" r="10.0" fill="#22a0e0"/><circle cx="12.4" cy="942.1" r="1.2" fill="#f2f2f2"/><circle cx="120.3" cy="944.8" r="6.30" fill="none" stroke="#f4d23a" stroke-width="4.0"/><circle cx="144.6" cy="941.0" r="8.5" fill="#f4d23a"/><circle cx="144.6" cy="941.0" r="1.2" fill="#f2f2f2"/><circle cx="167.8" cy="935.5" r="7.25" fill="none" stroke="#cfdc9c" stroke-width="1.5"/><circle cx="191.4" cy="929.4" r="8.5" fill="#f4b4c7"/><circle cx="191.4" cy="929.4" r="1.2" fill="#f2f2f2"/><circle cx="188.4" cy="948.4" r="6.30" fill="none" stroke="#7869c4" stroke-width="4.0"/><circle cx="165.3" cy="954.2" r="8.5" fill="#80d8d1"/><circle cx="165.3" cy="954.2" r="1.2" fill="#f2f2f2"/><circle cx="41.6" cy="964.6" r="18.15" fill="none" stroke="#f4b4c7" stroke-width="12.3"/><circle cx="94.3" cy="972.2" r="22.50" fill="none" stroke="#80d8d1" stroke-width="3.0"/><circle cx="140.9" cy="960.4" r="6.30" fill="none" stroke="#7869c4" stroke-width="4.0"/><circle cx="138.2" cy="980.8" r="6.55" fill="none" stroke="#7869c4" stroke-width="3.5"/><circle cx="134.8" cy="1001.7" r="6.55" fill="none" stroke="#f4d23a" stroke-width="3.5"/><circle cx="50.0" cy="999.0" r="10.0" fill="#22a0e0"/><circle cx="50.0" cy="999.0" r="1.2" fill="#f2f2f2"/><circle cx="70.8" cy="1000.5" r="10.0" fill="#22a0e0"/><circle cx="70.8" cy="1000.5" r="1.2" fill="#f2f2f2"/><circle cx="12.1" cy="1001.1" r="9.25" fill="none" stroke="#f4b4c7" stroke-width="1.5"/><circle cx="161.4" cy="974.5" r="8.0" fill="none" stroke="#f4b4c7" stroke-width="1.0"/><circle cx="161.4" cy="974.5" r="5.0" fill="none" stroke="#f4b4c7" stroke-width="1.0"/><circle cx="158.5" cy="994.7" r="6.55" fill="none" stroke="#76cbf0" stroke-width="3.5"/><circle cx="185.0" cy="968.5" r="8.5" fill="#80d8d1"/><circle cx="185.0" cy="968.5" r="1.2" fill="#f2f2f2"/><circle cx="181.6" cy="987.8" r="7.25" fill="none" stroke="#cfdc9c" stroke-width="1.5"/><circle cx="295.0" cy="15.7" r="5.80" fill="none" stroke="#f4b4c7" stroke-width="5.0"/><circle cx="310.4" cy="22.3" r="8.3" fill="#f4b4c7"/><circle cx="310.4" cy="22.3" r="1.2" fill="#f2f2f2"/><circle cx="334.2" cy="14.0" r="6.05" fill="none" stroke="#f4d23a" stroke-width="4.5"/><circle cx="354.5" cy="10.7" r="6.50" fill="none" stroke="#22a0e0" stroke-width="3.0"/><circle cx="371.9" cy="16.5" r="7.25" fill="none" stroke="#c6ccd6" stroke-width="1.5"/><circle cx="390.0" cy="20.7" r="7.25" fill="none" stroke="#58b2e3" stroke-width="1.5"/><circle cx="276.0" cy="35.5" r="7.25" fill="none" stroke="#58b2e3" stroke-width="1.5"/><circle cx="295.0" cy="33.0" r="8.3" fill="#22a0e0"/><circle cx="295.0" cy="33.0" r="1.2" fill="#f2f2f2"/><circle cx="310.7" cy="38.8" r="6.05" fill="none" stroke="#f4d23a" stroke-width="4.5"/><circle cx="326.0" cy="28.0" r="7.25" fill="none" stroke="#f4b4c7" stroke-width="1.5"/><circle cx="327.0" cy="45.5" r="6.25" fill="none" stroke="#22a0e0" stroke-width="3.5"/><circle cx="347.0" cy="26.4" r="6.50" fill="none" stroke="#f4b4c7" stroke-width="2.0"/><circle cx="340.5" cy="43.0" r="7.25" fill="none" stroke="#c6ccd6" stroke-width="1.5"/><circle cx="364.5" cy="32.2" r="5.80" fill="none" stroke="#f4b4c7" stroke-width="5.0"/><circle cx="381.8" cy="34.7" r="7.25" fill="none" stroke="#f4b4c7" stroke-width="1.5"/><circle cx="396.7" cy="43.8" r="8.0" fill="#f4d23a"/><circle cx="396.7" cy="43.8" r="1.2" fill="#f2f2f2"/><circle cx="272.7" cy="51.2" r="5.55" fill="none" stroke="#f4b4c7" stroke-width="5.5"/><circle cx="290.6" cy="49.6" r="8.5" fill="#22a0e0"/><circle cx="290.6" cy="49.6" r="1.2" fill="#f2f2f2"/><circle cx="307.4" cy="55.4" r="7.25" fill="none" stroke="#c6ccd6" stroke-width="1.5"/><circle cx="323.1" cy="61.5" r="7.00" fill="none" stroke="#7869c4" stroke-width="2.0"/><circle cx="341.3" cy="60.3" r="7.25" fill="none" stroke="#c6ccd6" stroke-width="1.5"/><circle cx="362.0" cy="49.6" r="7.25" fill="none" stroke="#58b2e3" stroke-width="1.5"/><circle cx="378.8" cy="53.7" r="6.75" fill="none" stroke="#7869c4" stroke-width="2.5"/><circle cx="393.4" cy="62.8" r="7.25" fill="none" stroke="#cfdc9c" stroke-width="1.5"/><circle cx="254.5" cy="67.0" r="7.25" fill="none" stroke="#58b2e3" stroke-width="1.5"/><circle cx="273.6" cy="69.1" r="8.5" fill="#22a0e0"/><circle cx="273.6" cy="69.1" r="1.2" fill="#f2f2f2"/><circle cx="290.9" cy="67.8" r="7.25" fill="none" stroke="#cfdc9c" stroke-width="1.5"/><circle cx="307.4" cy="72.7" r="6.30" fill="none" stroke="#22a0e0" stroke-width="4.0"/><circle cx="332.2" cy="76.0" r="7.25" fill="none" stroke="#c6ccd6" stroke-width="1.5"/><circle cx="357.0" cy="66.0" r="7.25" fill="none" stroke="#c6ccd6" stroke-width="1.5"/><circle cx="374.4" cy="71.0" r="8.3" fill="#f4d23a"/><circle cx="374.4" cy="71.0" r="1.2" fill="#f2f2f2"/><circle cx="389.3" cy="78.5" r="7.25" fill="none" stroke="#58b2e3" stroke-width="1.5"/><circle cx="255.4" cy="84.3" r="5.55" fill="none" stroke="#f4b4c7" stroke-width="5.5"/><circle cx="274.4" cy="86.0" r="8.3" fill="#f4b4c7"/><circle cx="274.4" cy="86.0" r="1.2" fill="#f2f2f2"/><circle cx="291.7" cy="85.1" r="7.25" fill="none" stroke="#c6ccd6" stroke-width="1.5"/><circle cx="308.3" cy="91.2" r="7.25" fill="none" stroke="#58b2e3" stroke-width="1.5"/><circle cx="327.3" cy="93.4" r="6.05" fill="none" stroke="#f4b4c7" stroke-width="4.5"/><circle cx="348.0" cy="81.8" r="7.25" fill="none" stroke="#c6ccd6" stroke-width="1.5"/><circle cx="366.1" cy="86.8" r="8.0" fill="#f4d23a"/><circle cx="366.1" cy="86.8" r="1.2" fill="#f2f2f2"/><circle cx="381.0" cy="94.2" r="7.25" fill="none" stroke="#c6ccd6" stroke-width="1.5"/><circle cx="237.2" cy="97.5" r="7.00" fill="none" stroke="#f4b4c7" stroke-width="2.0"/><circle cx="255.4" cy="101.7" r="8.5" fill="#22a0e0"/><circle cx="255.4" cy="101.7" r="1.2" fill="#f2f2f2"/><circle cx="274.4" cy="103.3" r="7.25" fill="none" stroke="#cfdc9c" stroke-width="1.5"/><circle cx="291.7" cy="102.8" r="6.30" fill="none" stroke="#22a0e0" stroke-width="4.0"/><circle cx="308.3" cy="107.8" r="7.25" fill="none" stroke="#c6ccd6" stroke-width="1.5"/><circle cx="327.3" cy="110.4" r="7.25" fill="none" stroke="#58b2e3" stroke-width="1.5"/><circle cx="348.0" cy="99.2" r="7.25" fill="none" stroke="#7869c4" stroke-width="1.5"/><circle cx="343.8" cy="115.7" r="7.25" fill="none" stroke="#7869c4" stroke-width="1.5"/><circle cx="362.8" cy="102.5" r="7.25" fill="none" stroke="#cfdc9c" stroke-width="1.5"/><circle cx="381.0" cy="110.4" r="7.25" fill="none" stroke="#58b2e3" stroke-width="1.5"/><circle cx="238.0" cy="114.9" r="5.55" fill="none" stroke="#f4b4c7" stroke-width="5.5"/><circle cx="255.4" cy="119.3" r="8.3" fill="#f4b4c7"/><circle cx="255.4" cy="119.3" r="1.2" fill="#f2f2f2"/><circle cx="275.2" cy="121.5" r="7.25" fill="none" stroke="#c6ccd6" stroke-width="1.5"/><circle cx="291.7" cy="120.7" r="7.25" fill="none" stroke="#58b2e3" stroke-width="1.5"/><circle cx="314.9" cy="123.6" r="7.25" fill="none" stroke="#58b2e3" stroke-width="1.5"/><circle cx="331.4" cy="128.9" r="7.25" fill="none" stroke="#7869c4" stroke-width="1.5"/><circle cx="362.0" cy="119.8" r="7.25" fill="none" stroke="#cfdc9c" stroke-width="1.5"/><circle cx="377.7" cy="127.3" r="8.3" fill="#f4b4c7"/><circle cx="377.7" cy="127.3" r="1.2" fill="#f2f2f2"/><circle cx="394.2" cy="128.9" r="7.25" fill="none" stroke="#f4b4c7" stroke-width="1.5"/><circle cx="237.7" cy="133.0" r="8.5" fill="#22a0e0"/><circle cx="237.7" cy="133.0" r="1.2" fill="#f2f2f2"/><circle cx="263.6" cy="133.9" r="7.25" fill="none" stroke="#f4b4c7" stroke-width="1.5"/><circle cx="281.0" cy="138.0" r="7.25" fill="none" stroke="#58b2e3" stroke-width="1.5"/><circle cx="300.0" cy="134.7" r="5.80" fill="none" stroke="#f4b4c7" stroke-width="5.0"/><circle cx="314.9" cy="141.3" r="7.25" fill="none" stroke="#c6ccd6" stroke-width="1.5"/><circle cx="349.6" cy="132.2" r="7.25" fill="none" stroke="#cfdc9c" stroke-width="1.5"/><circle cx="365.3" cy="140.2" r="8.3" fill="#f4b4c7"/><circle cx="365.3" cy="140.2" r="1.2" fill="#f2f2f2"/><circle cx="383.5" cy="143.5" r="6.30" fill="none" stroke="#80d8d1" stroke-width="4.0"/><circle cx="223.1" cy="143.0" r="8.3" fill="#76cbf0"/><circle cx="223.1" cy="143.0" r="1.2" fill="#f2f2f2"/><circle cx="245.5" cy="148.0" r="7.25" fill="none" stroke="#cfdc9c" stroke-width="1.5"/><circle cx="263.6" cy="151.2" r="6.05" fill="none" stroke="#22a0e0" stroke-width="4.5"/><circle cx="281.0" cy="154.5" r="8.3" fill="#80d8d1"/><circle cx="281.0" cy="154.5" r="1.2" fill="#f2f2f2"/><circle cx="297.5" cy="153.7" r="7.25" fill="none" stroke="#c6ccd6" stroke-width="1.5"/><circle cx="315.7" cy="157.9" r="7.25" fill="none" stroke="#7869c4" stroke-width="1.5"/><circle cx="333.0" cy="145.5" r="5.80" fill="none" stroke="#76cbf0" stroke-width="5.0"/><circle cx="348.8" cy="151.2" r="7.25" fill="none" stroke="#58b2e3" stroke-width="1.5"/><circle cx="366.1" cy="157.9" r="7.25" fill="none" stroke="#f4b4c7" stroke-width="1.5"/><circle cx="398.0" cy="152.0" r="8.0" fill="none" stroke="#f4d23a" stroke-width="1.0"/><circle cx="398.0" cy="152.0" r="5.0" fill="none" stroke="#f4d23a" stroke-width="1.0"/><circle cx="206.6" cy="159.5" r="6.25" fill="none" stroke="#f5b3a8" stroke-width="2.5"/><circle cx="226.4" cy="160.3" r="8.5" fill="#22a0e0"/><circle cx="226.4" cy="160.3" r="1.2" fill="#f2f2f2"/><circle cx="243.0" cy="166.1" r="8.3" fill="#f4b4c7"/><circle cx="243.0" cy="166.1" r="1.2" fill="#f2f2f2"/><circle cx="261.2" cy="168.6" r="6.05" fill="none" stroke="#22a0e0" stroke-width="4.5"/><circle cx="280.2" cy="171.0" r="8.3" fill="#80d8d1"/><circle cx="280.2" cy="171.0" r="1.2" fill="#f2f2f2"/><circle cx="296.7" cy="172.7" r="7.25" fill="none" stroke="#c6ccd6" stroke-width="1.5"/><circle cx="332.2" cy="162.8" r="5.80" fill="none" stroke="#76cbf0" stroke-width="5.0"/><circle cx="349.6" cy="168.6" r="8.3" fill="#f4b4c7"/><circle cx="349.6" cy="168.6" r="1.2" fill="#f2f2f2"/><circle cx="368.6" cy="172.7" r="7.25" fill="none" stroke="#7869c4" stroke-width="1.5"/><circle cx="383.5" cy="158.7" r="7.25" fill="none" stroke="#f4b4c7" stroke-width="1.5"/><circle cx="386.8" cy="178.5" r="6.30" fill="none" stroke="#80d8d1" stroke-width="4.0"/><circle cx="215.2" cy="174.4" r="8.5" fill="#22a0e0"/><circle cx="215.2" cy="174.4" r="1.2" fill="#f2f2f2"/><circle cx="231.4" cy="179.3" r="8.3" fill="#f4b4c7"/><circle cx="231.4" cy="179.3" r="1.2" fill="#f2f2f2"/><circle cx="249.6" cy="181.8" r="6.05" fill="none" stroke="#22a0e0" stroke-width="4.5"/><circle cx="267.8" cy="185.1" r="8.3" fill="#80d8d1"/><circle cx="267.8" cy="185.1" r="1.2" fill="#f2f2f2"/><circle cx="287.6" cy="188.4" r="7.25" fill="none" stroke="#58b2e3" stroke-width="1.5"/><circle cx="307.4" cy="190.0" r="5.80" fill="none" stroke="#76cbf0" stroke-width="5.0"/><circle cx="324.0" cy="195.0" r="8.5" fill="#22a0e0"/><circle cx="324.0" cy="195.0" r="1.2" fill="#f2f2f2"/><circle cx="315.7" cy="174.4" r="7.25" fill="none" stroke="#7869c4" stroke-width="1.5"/><circle cx="366.9" cy="188.4" r="7.25" fill="none" stroke="#c6ccd6" stroke-width="1.5"/><circle cx="215.7" cy="194.2" r="8.3" fill="#80d8d1"/><circle cx="215.7" cy="194.2" r="1.2" fill="#f2f2f2"/><circle cx="234.7" cy="195.0" r="7.25" fill="none" stroke="#cfdc9c" stroke-width="1.5"/><circle cx="202.5" cy="199.9" r="8.3" fill="#76cbf0"/><circle cx="202.5" cy="199.9" r="1.2" fill="#f2f2f2"/><circle cx="253.7" cy="198.3" r="7.25" fill="none" stroke="#58b2e3" stroke-width="1.5"/><circle cx="271.9" cy="200.7" r="6.30" fill="none" stroke="#f4b4c7" stroke-width="4.0"/><circle cx="288.4" cy="208.2" r="7.25" fill="none" stroke="#58b2e3" stroke-width="1.5"/><circle cx="342.1" cy="199.1" r="7.25" fill="none" stroke="#f4b4c7" stroke-width="1.5"/><circle cx="362.0" cy="205.7" r="5.55" fill="none" stroke="#f4b4c7" stroke-width="5.5"/><circle cx="386.0" cy="196.6" r="7.05" fill="none" stroke="#80d8d1" stroke-width="2.5"/><circle cx="216.5" cy="215.6" r="8.3" fill="#f4b4c7"/><circle cx="216.5" cy="215.6" r="1.2" fill="#f2f2f2"/><circle cx="238.3" cy="213.1" r="6.30" fill="none" stroke="#22a0e0" stroke-width="4.0"/><circle cx="257.5" cy="214.8" r="8.5" fill="#80d8d1"/><circle cx="257.5" cy="214.8" r="1.2" fill="#f2f2f2"/><circle cx="274.4" cy="218.1" r="7.25" fill="none" stroke="#58b2e3" stroke-width="1.5"/><circle cx="310.7" cy="208.2" r="5.80" fill="none" stroke="#76cbf0" stroke-width="5.0"/><circle cx="327.3" cy="213.1" r="8.3" fill="#f4b4c7"/><circle cx="327.3" cy="213.1" r="1.2" fill="#f2f2f2"/><circle cx="346.3" cy="216.4" r="6.50" fill="none" stroke="#7869c4" stroke-width="3.0"/><circle cx="362.0" cy="222.2" r="5.80" fill="none" stroke="#f3ab58" stroke-width="5.0"/><circle cx="381.8" cy="213.1" r="6.80" fill="none" stroke="#80d8d1" stroke-width="3.0"/><circle cx="215.7" cy="233.8" r="6.80" fill="none" stroke="#76cbf0" stroke-width="3.0"/><circle cx="232.7" cy="228.8" r="7.25" fill="none" stroke="#cfdc9c" stroke-width="1.5"/><circle cx="253.7" cy="231.3" r="6.05" fill="none" stroke="#f4b4c7" stroke-width="4.5"/><circle cx="270.2" cy="234.6" r="7.25" fill="none" stroke="#58b2e3" stroke-width="1.5"/><circle cx="290.1" cy="227.7" r="6.30" fill="none" stroke="#76cbf0" stroke-width="4.0"/><circle cx="313.2" cy="224.7" r="7.25" fill="none" stroke="#cfdc9c" stroke-width="1.5"/><circle cx="333.1" cy="228.8" r="6.30" fill="none" stroke="#80d8d1" stroke-width="4.0"/><circle cx="380.2" cy="230.5" r="7.25" fill="none" stroke="#58b2e3" stroke-width="1.5"/><circle cx="203.3" cy="249.5" r="6.55" fill="none" stroke="#76cbf0" stroke-width="3.5"/><circle cx="238.8" cy="244.5" r="8.5" fill="#80d8d1"/><circle cx="238.8" cy="244.5" r="1.2" fill="#f2f2f2"/><circle cx="223.1" cy="248.7" r="7.25" fill="none" stroke="#c6ccd6" stroke-width="1.5"/><circle cx="257.0" cy="247.9" r="7.25" fill="none" stroke="#c6ccd6" stroke-width="1.5"/><circle cx="273.6" cy="252.0" r="7.25" fill="none" stroke="#7869c4" stroke-width="1.5"/><circle cx="301.7" cy="243.7" r="6.05" fill="none" stroke="#76cbf0" stroke-width="4.5"/><circle cx="319.8" cy="240.9" r="8.5" fill="#f4d23a"/><circle cx="319.8" cy="240.9" r="1.2" fill="#f2f2f2"/><circle cx="335.5" cy="246.2" r="7.05" fill="none" stroke="#f4b4c7" stroke-width="2.5"/><circle cx="354.5" cy="239.3" r="5.80" fill="none" stroke="#f3ab58" stroke-width="5.0"/><circle cx="372.7" cy="247.0" r="7.25" fill="none" stroke="#58b2e3" stroke-width="1.5"/><circle cx="395.0" cy="238.8" r="5.80" fill="none" stroke="#f4d23a" stroke-width="5.0"/><circle cx="216.5" cy="264.4" r="7.25" fill="none" stroke="#cfdc9c" stroke-width="1.5"/><circle cx="240.0" cy="264.0" r="6.05" fill="none" stroke="#22a0e0" stroke-width="4.5"/><circle cx="258.7" cy="266.9" r="7.25" fill="none" stroke="#c6ccd6" stroke-width="1.5"/><circle cx="276.9" cy="269.3" r="7.40" fill="none" stroke="#80d8d1" stroke-width="1.2"/><circle cx="290.1" cy="256.9" r="5.80" fill="none" stroke="#76cbf0" stroke-width="5.0"/><circle cx="307.4" cy="260.2" r="8.3" fill="#f4b4c7"/><circle cx="307.4" cy="260.2" r="1.2" fill="#f2f2f2"/><circle cx="328.1" cy="261.9" r="6.75" fill="none" stroke="#7869c4" stroke-width="2.5"/><circle cx="350.1" cy="261.9" r="5.80" fill="none" stroke="#f3ab58" stroke-width="5.0"/><circle cx="371.1" cy="264.4" r="7.25" fill="none" stroke="#f5b3a8" stroke-width="1.5"/><circle cx="387.6" cy="254.5" r="8.5" fill="#f4d23a"/><circle cx="387.6" cy="254.5" r="1.2" fill="#f2f2f2"/><circle cx="395.9" cy="271.0" r="7.25" fill="none" stroke="#c6ccd6" stroke-width="1.5"/><circle cx="219.0" cy="281.7" r="5.80" fill="none" stroke="#f4b4c7" stroke-width="5.0"/><circle cx="240.5" cy="283.4" r="7.25" fill="none" stroke="#c6ccd6" stroke-width="1.5"/><circle cx="262.8" cy="281.7" r="7.25" fill="none" stroke="#7869c4" stroke-width="1.5"/><circle cx="280.2" cy="285.0" r="7.25" fill="none" stroke="#cfdc9c" stroke-width="1.5"/><circle cx="293.4" cy="273.5" r="7.25" fill="none" stroke="#c6ccd6" stroke-width="1.5"/><circle cx="310.4" cy="277.3" r="8.5" fill="#f4d23a"/><circle cx="310.4" cy="277.3" r="1.2" fill="#f2f2f2"/><circle cx="329.8" cy="280.6" r="6.30" fill="none" stroke="#80d8d1" stroke-width="4.0"/><circle cx="351.2" cy="278.4" r="6.30" fill="none" stroke="#80d8d1" stroke-width="4.0"/><circle cx="376.0" cy="284.2" r="8.5" fill="#f4d23a"/><circle cx="376.0" cy="284.2" r="1.2" fill="#f2f2f2"/><circle cx="203.3" cy="289.2" r="7.25" fill="none" stroke="#cfdc9c" stroke-width="1.5"/><circle cx="226.4" cy="297.4" r="6.05" fill="none" stroke="#76cbf0" stroke-width="4.5"/><circle cx="244.3" cy="300.4" r="5.80" fill="none" stroke="#22a0e0" stroke-width="5.0"/><circle cx="266.9" cy="298.3" r="7.25" fill="none" stroke="#c6ccd6" stroke-width="1.5"/><circle cx="282.6" cy="302.4" r="7.25" fill="none" stroke="#cfdc9c" stroke-width="1.5"/><circle cx="296.7" cy="289.2" r="8.3" fill="#f4b4c7"/><circle cx="296.7" cy="289.2" r="1.2" fill="#f2f2f2"/><circle cx="314.9" cy="291.7" r="7.05" fill="none" stroke="#f4b4c7" stroke-width="2.5"/><circle cx="331.4" cy="298.3" r="5.55" fill="none" stroke="#f3ab58" stroke-width="5.5"/><circle cx="358.7" cy="293.8" r="6.55" fill="none" stroke="#7869c4" stroke-width="3.5"/><circle cx="382.6" cy="299.1" r="5.55" fill="none" stroke="#f4d23a" stroke-width="5.5"/><circle cx="205.0" cy="308.7" r="5.80" fill="none" stroke="#f4b4c7" stroke-width="5.0"/><circle cx="227.3" cy="316.4" r="7.25" fill="none" stroke="#80d8d1" stroke-width="1.5"/><circle cx="245.5" cy="316.4" r="7.25" fill="none" stroke="#7869c4" stroke-width="1.5"/><circle cx="267.8" cy="316.4" r="7.25" fill="none" stroke="#cfdc9c" stroke-width="1.5"/><circle cx="302.1" cy="306.5" r="8.5" fill="#f4d23a"/><circle cx="302.1" cy="306.5" r="1.2" fill="#f2f2f2"/><circle cx="288.4" cy="318.1" r="8.5" fill="#f4d23a"/><circle cx="288.4" cy="318.1" r="1.2" fill="#f2f2f2"/><circle cx="303.8" cy="323.0" r="6.80" fill="none" stroke="#f4b4c7" stroke-width="3.0"/><circle cx="324.8" cy="314.0" r="5.55" fill="none" stroke="#f3ab58" stroke-width="5.5"/><circle cx="343.5" cy="311.5" r="7.25" fill="none" stroke="#58b2e3" stroke-width="1.5"/><circle cx="363.6" cy="314.8" r="8.5" fill="#f4d23a"/><circle cx="363.6" cy="314.8" r="1.2" fill="#f2f2f2"/><circle cx="391.7" cy="316.0" r="7.00" fill="none" stroke="#80d8d1" stroke-width="2.0"/><circle cx="208.3" cy="326.9" r="8.5" fill="#80d8d1"/><circle cx="208.3" cy="326.9" r="1.2" fill="#f2f2f2"/><circle cx="231.4" cy="333.8" r="5.80" fill="none" stroke="#22a0e0" stroke-width="5.0"/><circle cx="252.9" cy="332.1" r="7.25" fill="none" stroke="#c6ccd6" stroke-width="1.5"/><circle cx="273.6" cy="331.3" r="8.3" fill="#f4b4c7"/><circle cx="273.6" cy="331.3" r="1.2" fill="#f2f2f2"/><circle cx="335.5" cy="328.0" r="7.25" fill="none" stroke="#58b2e3" stroke-width="1.5"/><circle cx="371.1" cy="329.7" r="5.55" fill="none" stroke="#f4d23a" stroke-width="5.5"/><circle cx="352.9" cy="335.5" r="8.5" fill="#f4d23a"/><circle cx="352.9" cy="335.5" r="1.2" fill="#f2f2f2"/><circle cx="393.4" cy="336.3" r="8.5" fill="#80d8d1"/><circle cx="393.4" cy="336.3" r="1.2" fill="#f2f2f2"/><circle cx="215.7" cy="342.9" r="6.05" fill="none" stroke="#76cbf0" stroke-width="4.5"/><circle cx="238.0" cy="350.3" r="7.25" fill="none" stroke="#cfdc9c" stroke-width="1.5"/><circle cx="260.3" cy="348.7" r="7.25" fill="none" stroke="#c6ccd6" stroke-width="1.5"/><circle cx="276.9" cy="351.2" r="7.25" fill="none" stroke="#58b2e3" stroke-width="1.5"/><circle cx="296.7" cy="340.4" r="7.25" fill="none" stroke="#58b2e3" stroke-width="1.5"/><circle cx="319.0" cy="337.9" r="5.80" fill="none" stroke="#f3ab58" stroke-width="5.0"/><circle cx="323.1" cy="353.6" r="6.30" fill="none" stroke="#80d8d1" stroke-width="4.0"/><circle cx="376.0" cy="348.7" r="7.00" fill="none" stroke="#58b2e3" stroke-width="2.0"/><circle cx="204.1" cy="368.5" r="8.5" fill="#80d8d1"/><circle cx="204.1" cy="368.5" r="1.2" fill="#f2f2f2"/><circle cx="220.7" cy="359.4" r="7.25" fill="none" stroke="#c6ccd6" stroke-width="1.5"/><circle cx="244.6" cy="364.4" r="7.25" fill="none" stroke="#c6ccd6" stroke-width="1.5"/><circle cx="264.5" cy="364.4" r="8.3" fill="#f4b4c7"/><circle cx="264.5" cy="364.4" r="1.2" fill="#f2f2f2"/><circle cx="300.0" cy="357.8" r="6.05" fill="none" stroke="#f4b4c7" stroke-width="4.5"/><circle cx="344.6" cy="351.7" r="8.5" fill="#f4d23a"/><circle cx="344.6" cy="351.7" r="1.2" fill="#f2f2f2"/><circle cx="358.7" cy="359.4" r="5.55" fill="none" stroke="#f4d23a" stroke-width="5.5"/><circle cx="374.4" cy="366.5" r="6.80" fill="none" stroke="#80d8d1" stroke-width="3.0"/><circle cx="394.2" cy="373.5" r="8.5" fill="#76cbf0"/><circle cx="394.2" cy="373.5" r="1.2" fill="#f2f2f2"/><circle cx="227.8" cy="374.8" r="8.5" fill="#76cbf0"/><circle cx="227.8" cy="374.8" r="1.2" fill="#f2f2f2"/><circle cx="252.1" cy="380.9" r="6.80" fill="none" stroke="#7869c4" stroke-width="3.0"/><circle cx="269.4" cy="380.1" r="7.25" fill="none" stroke="#58b2e3" stroke-width="1.5"/><circle cx="288.4" cy="371.0" r="7.25" fill="none" stroke="#58b2e3" stroke-width="1.5"/><circle cx="305.0" cy="374.3" r="5.55" fill="none" stroke="#f3ab58" stroke-width="5.5"/><circle cx="322.3" cy="367.7" r="7.25" fill="none" stroke="#58b2e3" stroke-width="1.5"/><circle cx="336.4" cy="380.1" r="7.25" fill="none" stroke="#80d8d1" stroke-width="1.5"/><circle cx="354.5" cy="374.3" r="8.5" fill="#f4d23a"/><circle cx="354.5" cy="374.3" r="1.2" fill="#f2f2f2"/><circle cx="369.4" cy="381.7" r="5.80" fill="none" stroke="#f4d23a" stroke-width="5.0"/><circle cx="318.2" cy="385.9" r="8.0" fill="none" stroke="#f3ab58" stroke-width="1.0"/><circle cx="318.2" cy="385.9" r="5.5" fill="none" stroke="#f3ab58" stroke-width="1.0"/><circle cx="318.2" cy="385.9" r="3.0" fill="none" stroke="#f3ab58" stroke-width="1.0"/><circle cx="209.1" cy="383.4" r="7.25" fill="none" stroke="#c6ccd6" stroke-width="1.5"/><circle cx="232.2" cy="390.7" r="7.40" fill="none" stroke="#80d8d1" stroke-width="1.2"/><circle cx="256.2" cy="397.4" r="8.3" fill="#f4b4c7"/><circle cx="256.2" cy="397.4" r="1.2" fill="#f2f2f2"/><circle cx="274.4" cy="399.0" r="8.3" fill="#f4d23a"/><circle cx="274.4" cy="399.0" r="2.0" fill="#e2e2e2"/><circle cx="299.2" cy="392.4" r="5.55" fill="none" stroke="#f3ab58" stroke-width="5.5"/><circle cx="388.4" cy="393.2" r="9.75" fill="none" stroke="#80d8d1" stroke-width="1.5"/><circle cx="212.4" cy="404.0" r="8.5" fill="#76cbf0"/><circle cx="212.4" cy="404.0" r="1.2" fill="#f2f2f2"/><circle cx="236.4" cy="409.8" r="6.75" fill="none" stroke="#7869c4" stroke-width="2.5"/><circle cx="259.5" cy="415.5" r="7.40" fill="none" stroke="#80d8d1" stroke-width="1.2"/><circle cx="279.3" cy="414.7" r="7.40" fill="none" stroke="#80d8d1" stroke-width="1.2"/><circle cx="297.2" cy="417.2" r="5.55" fill="none" stroke="#f3ab58" stroke-width="5.5"/><circle cx="312.4" cy="404.8" r="8.5" fill="#d6a56c"/><circle cx="312.4" cy="404.8" r="1.2" fill="#f2f2f2"/><circle cx="332.2" cy="396.5" r="7.40" fill="none" stroke="#80d8d1" stroke-width="1.2"/><circle cx="327.3" cy="413.9" r="7.40" fill="none" stroke="#80d8d1" stroke-width="1.2"/><circle cx="346.8" cy="405.6" r="5.80" fill="none" stroke="#f4d23a" stroke-width="5.0"/><circle cx="364.5" cy="399.8" r="5.80" fill="none" stroke="#f4d23a" stroke-width="5.0"/><circle cx="379.3" cy="413.9" r="9.25" fill="none" stroke="#f5b3a8" stroke-width="1.5"/><circle cx="398.3" cy="411.4" r="7.00" fill="none" stroke="#76cbf0" stroke-width="6.0"/><circle cx="208.3" cy="420.5" r="8.5" fill="#76cbf0"/><circle cx="208.3" cy="420.5" r="1.2" fill="#f2f2f2"/><circle cx="232.2" cy="425.5" r="6.75" fill="none" stroke="#7869c4" stroke-width="2.5"/><circle cx="255.4" cy="431.2" r="7.40" fill="none" stroke="#80d8d1" stroke-width="1.2"/><circle cx="275.2" cy="432.1" r="8.5" fill="#f3ab58"/><circle cx="275.2" cy="432.1" r="1.2" fill="#f2f2f2"/><circle cx="291.7" cy="434.5" r="5.55" fill="none" stroke="#f3ab58" stroke-width="5.5"/><circle cx="308.3" cy="431.2" r="8.5" fill="#80d8d1"/><circle cx="308.3" cy="431.2" r="1.2" fill="#f2f2f2"/><circle cx="324.8" cy="441.2" r="7.40" fill="none" stroke="#80d8d1" stroke-width="1.2"/><circle cx="341.3" cy="422.1" r="5.80" fill="none" stroke="#f4d23a" stroke-width="5.0"/><circle cx="356.2" cy="430.4" r="5.80" fill="none" stroke="#f4d23a" stroke-width="5.0"/><circle cx="380.2" cy="436.2" r="6.75" fill="none" stroke="#76cbf0" stroke-width="7.5"/><circle cx="393.4" cy="451.1" r="7.50" fill="none" stroke="#76cbf0" stroke-width="5.0"/><circle cx="204.1" cy="437.9" r="8.5" fill="#76cbf0"/><circle cx="204.1" cy="437.9" r="1.2" fill="#f2f2f2"/><circle cx="227.3" cy="443.6" r="6.75" fill="none" stroke="#7869c4" stroke-width="2.5"/><circle cx="251.2" cy="448.6" r="7.40" fill="none" stroke="#80d8d1" stroke-width="1.2"/><circle cx="269.4" cy="449.4" r="8.5" fill="#f3ab58"/><circle cx="269.4" cy="449.4" r="1.2" fill="#f2f2f2"/><circle cx="286.8" cy="451.9" r="5.55" fill="none" stroke="#f3ab58" stroke-width="5.5"/><circle cx="303.3" cy="448.6" r="6.30" fill="none" stroke="#f4b4c7" stroke-width="4.0"/><circle cx="319.0" cy="457.7" r="7.40" fill="none" stroke="#80d8d1" stroke-width="1.2"/><circle cx="338.8" cy="449.4" r="5.80" fill="none" stroke="#f4d23a" stroke-width="5.0"/><circle cx="356.2" cy="455.2" r="5.80" fill="none" stroke="#f4d23a" stroke-width="5.0"/><circle cx="223.1" cy="459.3" r="6.75" fill="none" stroke="#7869c4" stroke-width="2.5"/><circle cx="246.3" cy="465.1" r="7.40" fill="none" stroke="#80d8d1" stroke-width="1.2"/><circle cx="264.5" cy="466.0" r="8.5" fill="#f3ab58"/><circle cx="264.5" cy="466.0" r="1.2" fill="#f2f2f2"/><circle cx="281.0" cy="468.4" r="5.55" fill="none" stroke="#f3ab58" stroke-width="5.5"/><circle cx="298.3" cy="465.1" r="6.55" fill="none" stroke="#f4b4c7" stroke-width="3.5"/><circle cx="315.7" cy="474.2" r="7.40" fill="none" stroke="#80d8d1" stroke-width="1.2"/><circle cx="333.1" cy="466.8" r="5.80" fill="none" stroke="#f4d23a" stroke-width="5.0"/><circle cx="350.4" cy="471.7" r="7.25" fill="none" stroke="#c6ccd6" stroke-width="1.5"/><circle cx="371.9" cy="467.6" r="6.25" fill="none" stroke="#76cbf0" stroke-width="7.5"/><circle cx="394.2" cy="476.7" r="9.25" fill="none" stroke="#7869c4" stroke-width="1.5"/><circle cx="212.4" cy="475.0" r="7.40" fill="none" stroke="#80d8d1" stroke-width="1.2"/><circle cx="236.4" cy="480.0" r="7.00" fill="none" stroke="#cfdc9c" stroke-width="2.0"/><circle cx="260.3" cy="484.1" r="8.5" fill="#f3ab58"/><circle cx="260.3" cy="484.1" r="1.2" fill="#f2f2f2"/><circle cx="277.7" cy="485.8" r="5.55" fill="none" stroke="#f3ab58" stroke-width="5.5"/><circle cx="294.2" cy="482.5" r="6.80" fill="none" stroke="#f4b4c7" stroke-width="3.0"/><circle cx="309.1" cy="492.4" r="7.40" fill="none" stroke="#80d8d1" stroke-width="1.2"/><circle cx="327.3" cy="483.3" r="5.80" fill="none" stroke="#f4d23a" stroke-width="5.0"/><circle cx="348.8" cy="492.4" r="9.25" fill="none" stroke="#c6ccd6" stroke-width="1.5"/><circle cx="371.1" cy="493.2" r="6.25" fill="none" stroke="#76cbf0" stroke-width="7.5"/><circle cx="202.5" cy="490.7" r="7.25" fill="none" stroke="#c6ccd6" stroke-width="1.5"/><circle cx="225.6" cy="494.9" r="6.75" fill="none" stroke="#f4b4c7" stroke-width="2.5"/><circle cx="249.6" cy="499.0" r="7.25" fill="none" stroke="#58b2e3" stroke-width="1.5"/><circle cx="273.6" cy="502.3" r="5.55" fill="none" stroke="#f3ab58" stroke-width="5.5"/><circle cx="290.1" cy="499.0" r="6.55" fill="none" stroke="#f4b4c7" stroke-width="3.5"/><circle cx="305.8" cy="508.9" r="5.55" fill="none" stroke="#f3ab58" stroke-width="5.5"/><circle cx="324.8" cy="499.8" r="5.80" fill="none" stroke="#f4d23a" stroke-width="5.0"/><circle cx="321.5" cy="517.2" r="5.80" fill="none" stroke="#f4d23a" stroke-width="5.0"/><circle cx="339.7" cy="509.8" r="7.25" fill="none" stroke="#c6ccd6" stroke-width="1.5"/><circle cx="387.6" cy="508.9" r="9.25" fill="none" stroke="#7869c4" stroke-width="1.5"/><circle cx="362.8" cy="514.7" r="6.25" fill="none" stroke="#76cbf0" stroke-width="7.5"/><circle cx="207.4" cy="508.9" r="7.40" fill="none" stroke="#80d8d1" stroke-width="1.2"/><circle cx="231.4" cy="512.2" r="7.40" fill="none" stroke="#80d8d1" stroke-width="1.2"/><circle cx="256.2" cy="516.9" r="8.5" fill="#f3ab58"/><circle cx="256.2" cy="516.9" r="1.2" fill="#f2f2f2"/><circle cx="279.3" cy="520.5" r="7.25" fill="none" stroke="#cfdc9c" stroke-width="1.5"/><circle cx="295.0" cy="527.9" r="6.50" fill="none" stroke="#22a0e0" stroke-width="3.0"/><circle cx="222.3" cy="528.8" r="6.50" fill="none" stroke="#f4b4c7" stroke-width="3.0"/><circle cx="245.5" cy="532.1" r="7.25" fill="none" stroke="#58b2e3" stroke-width="1.5"/><circle cx="269.4" cy="535.4" r="5.55" fill="none" stroke="#f3ab58" stroke-width="5.5"/><circle cx="309.1" cy="537.9" r="7.40" fill="none" stroke="#80d8d1" stroke-width="1.2"/><circle cx="325.6" cy="546.1" r="6.75" fill="none" stroke="#22a0e0" stroke-width="2.5"/><circle cx="336.4" cy="526.3" r="7.25" fill="none" stroke="#f5b3a8" stroke-width="1.5"/><circle cx="349.6" cy="542.8" r="9.25" fill="none" stroke="#c6ccd6" stroke-width="1.5"/><circle cx="372.7" cy="537.0" r="6.25" fill="none" stroke="#76cbf0" stroke-width="7.5"/><circle cx="395.0" cy="538.7" r="7.00" fill="none" stroke="#f4b4c7" stroke-width="6.0"/><circle cx="210.7" cy="545.3" r="8.3" fill="#f4b4c7"/><circle cx="210.7" cy="545.3" r="2.0" fill="#e2e2e2"/><circle cx="234.7" cy="547.8" r="7.40" fill="none" stroke="#80d8d1" stroke-width="1.2"/><circle cx="259.2" cy="550.2" r="5.80" fill="none" stroke="#76cbf0" stroke-width="5.0"/><circle cx="284.3" cy="546.9" r="6.80" fill="none" stroke="#f4b4c7" stroke-width="3.0"/><circle cx="299.2" cy="556.0" r="5.55" fill="none" stroke="#f3ab58" stroke-width="5.5"/><circle cx="209.9" cy="562.6" r="8.3" fill="#f4b4c7"/><circle cx="209.9" cy="562.6" r="1.2" fill="#f2f2f2"/><circle cx="233.1" cy="564.3" r="7.25" fill="none" stroke="#58b2e3" stroke-width="1.5"/><circle cx="250.4" cy="564.3" r="8.5" fill="#f3ab58"/><circle cx="250.4" cy="564.3" r="1.2" fill="#f2f2f2"/><circle cx="267.8" cy="566.0" r="5.55" fill="none" stroke="#f3ab58" stroke-width="5.5"/><circle cx="282.6" cy="575.0" r="6.75" fill="none" stroke="#f4b4c7" stroke-width="2.5"/><circle cx="314.0" cy="566.0" r="7.25" fill="none" stroke="#7869c4" stroke-width="1.5"/><circle cx="343.0" cy="562.6" r="7.25" fill="none" stroke="#f5b3a8" stroke-width="1.5"/><circle cx="328.9" cy="571.7" r="7.25" fill="none" stroke="#c6ccd6" stroke-width="1.5"/><circle cx="363.6" cy="566.8" r="10.5" fill="#76cbf0"/><circle cx="363.6" cy="566.8" r="1.2" fill="#f2f2f2"/><circle cx="388.4" cy="560.2" r="6.50" fill="none" stroke="#f4b4c7" stroke-width="7.0"/></svg></div>
<div class="a pop">
  <div class="a" style="left:21px;top:41px;font-size:15.5px;color:#bdbdbd;line-height:20px;letter-spacing:0.2px">Size</div>
  <div class="a" style="left:62px;top:41px;font-size:16px;color:#f2f2f2;line-height:20px;letter-spacing:1.3px">2400 × 3000</div>
  <svg class="a" style="left:212px;top:45px" width="14" height="10" viewBox="0 0 14 10"><path d="M2 2.5 L7 7.5 L12 2.5" fill="none" stroke="#aaa" stroke-width="1.3"/></svg>
  <div class="a" style="left:21px;top:67px;width:208px;height:1px;background:#6a6a6a"></div>
  <div class="a" style="left:21px;top:89px;width:208px;height:32px;border-radius:16px;background:#e0e0e0;color:#3a3a3a;font-size:14px;line-height:32px;text-align:center;letter-spacing:0.2px">Render PNG</div>
</div>
<div class="a ib" style="top:125px">
  <svg class="a" style="left:12px;top:12px" width="27" height="27" viewBox="0 0 27 27"><path fill="none" stroke="#949494" stroke-width="1.25" d="M23.90,13.30 L23.88,13.63 L23.82,13.95 L23.68,14.26 L23.43,14.55 L22.98,14.80 L22.31,14.98 L21.59,15.11 L21.03,15.23 L20.67,15.38 L20.45,15.56 L20.31,15.75 L20.20,15.95 L20.11,16.16 L20.04,16.38 L20.01,16.62 L20.04,16.90 L20.19,17.26 L20.50,17.74 L20.92,18.34 L21.26,18.94 L21.41,19.43 L21.38,19.82 L21.25,20.14 L21.07,20.41 L20.85,20.65 L20.61,20.87 L20.34,21.05 L20.02,21.18 L19.63,21.21 L19.14,21.06 L18.54,20.72 L17.94,20.30 L17.46,19.99 L17.10,19.84 L16.82,19.81 L16.58,19.84 L16.36,19.91 L16.15,20.00 L15.95,20.11 L15.76,20.25 L15.58,20.47 L15.43,20.83 L15.31,21.39 L15.18,22.11 L15.00,22.78 L14.75,23.23 L14.46,23.48 L14.15,23.62 L13.83,23.68 L13.50,23.70 L13.17,23.68 L12.85,23.62 L12.54,23.48 L12.25,23.23 L12.00,22.78 L11.82,22.11 L11.69,21.39 L11.57,20.83 L11.42,20.47 L11.24,20.25 L11.05,20.11 L10.85,20.00 L10.64,19.91 L10.42,19.84 L10.18,19.81 L9.90,19.84 L9.54,19.99 L9.06,20.30 L8.46,20.72 L7.86,21.06 L7.37,21.21 L6.98,21.18 L6.66,21.05 L6.39,20.87 L6.15,20.65 L5.93,20.41 L5.75,20.14 L5.62,19.82 L5.59,19.43 L5.74,18.94 L6.08,18.34 L6.50,17.74 L6.81,17.26 L6.96,16.90 L6.99,16.62 L6.96,16.38 L6.89,16.16 L6.80,15.95 L6.69,15.75 L6.55,15.56 L6.33,15.38 L5.97,15.23 L5.41,15.11 L4.69,14.98 L4.02,14.80 L3.57,14.55 L3.32,14.26 L3.18,13.95 L3.12,13.63 L3.10,13.30 L3.12,12.97 L3.18,12.65 L3.32,12.34 L3.57,12.05 L4.02,11.80 L4.69,11.62 L5.41,11.49 L5.97,11.37 L6.33,11.22 L6.55,11.04 L6.69,10.85 L6.80,10.65 L6.89,10.44 L6.96,10.22 L6.99,9.98 L6.96,9.70 L6.81,9.34 L6.50,8.86 L6.08,8.26 L5.74,7.66 L5.59,7.17 L5.62,6.78 L5.75,6.46 L5.93,6.19 L6.15,5.95 L6.39,5.73 L6.66,5.55 L6.98,5.42 L7.37,5.39 L7.86,5.54 L8.46,5.88 L9.06,6.30 L9.54,6.61 L9.90,6.76 L10.18,6.79 L10.42,6.76 L10.64,6.69 L10.85,6.60 L11.05,6.49 L11.24,6.35 L11.42,6.13 L11.57,5.77 L11.69,5.21 L11.82,4.49 L12.00,3.82 L12.25,3.37 L12.54,3.12 L12.85,2.98 L13.17,2.92 L13.50,2.90 L13.83,2.92 L14.15,2.98 L14.46,3.12 L14.75,3.37 L15.00,3.82 L15.18,4.49 L15.31,5.21 L15.43,5.77 L15.58,6.13 L15.76,6.35 L15.95,6.49 L16.15,6.60 L16.36,6.69 L16.58,6.76 L16.82,6.79 L17.10,6.76 L17.46,6.61 L17.94,6.30 L18.54,5.88 L19.14,5.54 L19.63,5.39 L20.02,5.42 L20.34,5.55 L20.61,5.73 L20.85,5.95 L21.07,6.19 L21.25,6.46 L21.38,6.78 L21.41,7.17 L21.26,7.66 L20.92,8.26 L20.50,8.86 L20.19,9.34 L20.04,9.70 L20.01,9.98 L20.04,10.22 L20.11,10.44 L20.20,10.65 L20.31,10.85 L20.45,11.04 L20.67,11.22 L21.03,11.37 L21.59,11.49 L22.31,11.62 L22.98,11.80 L23.43,12.05 L23.68,12.34 L23.82,12.65 L23.88,12.97Z"/><circle cx="13.5" cy="13.3" r="4" fill="none" stroke="#949494" stroke-width="1.25"/></svg>
</div>
<div class="a ib" style="top:190px">
  <svg class="a" style="left:12px;top:12px" width="27" height="27" viewBox="0 0 27 27"><path fill="none" stroke="#949494" stroke-width="1.4" d="M13.5 4.6V14"/><path fill="#949494" d="M10.9 12.6H16.1L13.5 17.3Z"/><path fill="none" stroke="#949494" stroke-width="1.5" d="M4.4 15.8V21.4H22.6V15.8"/></svg>
</div>
<div class="a ib" style="top:255px">
  <svg class="a" style="left:12px;top:12px" width="27" height="27" viewBox="0 0 24 24"><path fill="none" stroke="#8e8e8e" stroke-width="1.3" d="M12 19.5l-6.2-6.3C3.9 11.3 4 8.2 6.1 6.6 8 5.2 10.6 5.7 12 7.6c1.4-1.9 4-2.4 5.9-1 2.1 1.6 2.2 4.7.3 6.6z"/></svg>
</div>
<div class="a btn" style="top:125px">List Seed for Sale</div>
<div class="a btn" style="top:192px">Minting requires a pass</div>

<div class="a sh" style="top:283px">Color</div>
<div class="a row" style="top:323px">Palette<span>Miami</span><i></i></div>
<div class="a row" style="top:363px">Color variety<span>High</span><i></i></div>
<div class="a row" style="top:403px">Color mode<span>Stacked</span><i></i></div>

<div class="a sh" style="top:466px">Flow</div>
<div class="a row" style="top:506px">Structure<span>Orbital</span><i></i></div>
<div class="a row" style="top:546px">Direction<span>Explosive</span><i></i></div>
<div class="a row" style="top:586px">Turbulence<span>None</span><i></i></div>

<div class="a sh" style="top:649px">Ringdots</div>
<div class="a row" style="top:689px">Count<span>1, 3, 7</span><i></i></div>
<div class="a row" style="top:729px">Thickness<span>Mixed</span><i></i></div>

<div class="a sh" style="top:792px">Spacing</div>
<div class="a row" style="top:832px">Size<span>Medium</span><i></i></div>
<div class="a row" style="top:872px">Size variety<span>Wild</span><i></i></div>
<div class="a row" style="top:912px">Density<span>Dense</span><i></i></div>
<div class="a row" style="top:952px">Margin<span>Crisp</span><i></i></div>

<div class="a ft" style="top:1015px;color:#bcbcbc">Generated by 0x15e...582 (2025)</div>
<div class="a ft" style="top:1036px;color:#8a8a8a">License: CC BY-NC 4.0</div>
</body></html>
